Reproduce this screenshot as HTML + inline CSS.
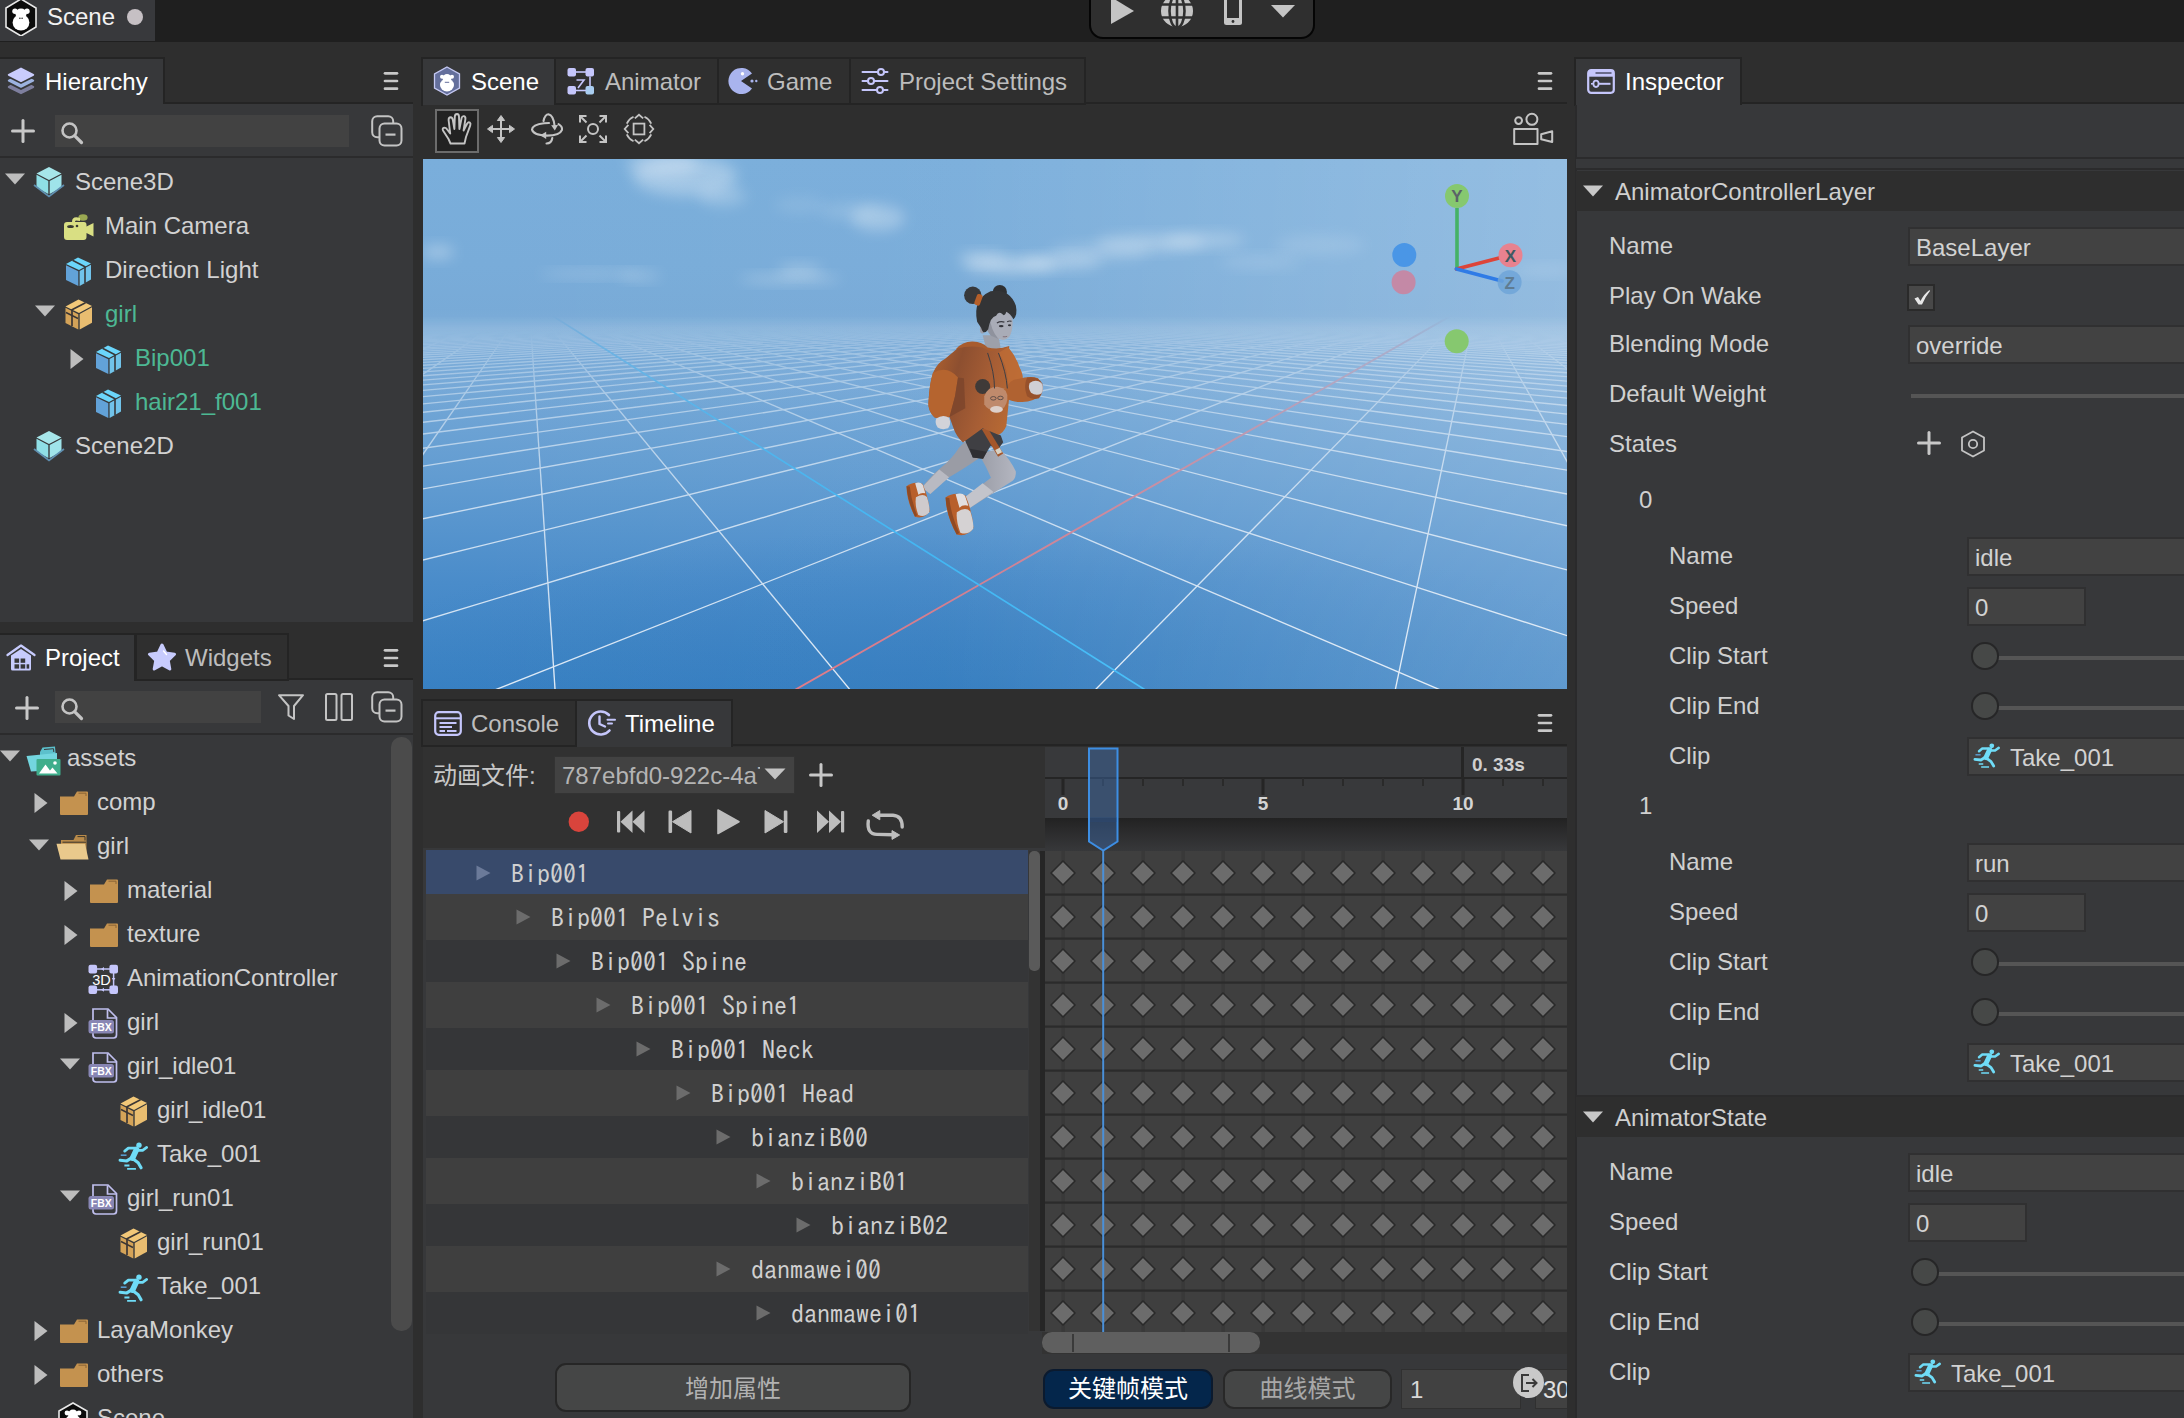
<!DOCTYPE html>
<html><head><meta charset="utf-8"><title>Scene</title>
<style>
html,body{margin:0;padding:0;}
body{width:2184px;height:1418px;overflow:hidden;background:#2e2e2e;position:relative;font-family:"Liberation Sans", "Noto Sans CJK SC", sans-serif;}
div,svg{position:absolute;box-sizing:border-box;}
.t{white-space:nowrap;}
.m{white-space:pre;font-family:"IPAGothic", "Liberation Mono", monospace;}
</style></head><body>
<div style="left:0px;top:0px;width:2184px;height:42px;background:#1f1f1f;"></div>
<div style="left:0px;top:0px;width:155px;height:41px;background:#38393c;"></div>
<svg style="left:3px;top:0px;" width="36" height="36" viewBox="0 0 36 36"><polygon points="18,-1 33,8 33,27 18,36 3,27 3,8" fill="#0c0c0c" stroke="#e8e8e8" stroke-width="1.6"/>
<ellipse cx="18" cy="22.5" rx="8.4" ry="8" fill="#fff"/><ellipse cx="18" cy="13.6" rx="5.6" ry="5" fill="#fff"/>
<circle cx="12" cy="11.3" r="2.7" fill="#fff"/><circle cx="24" cy="11.3" r="2.7" fill="#fff"/>
<circle cx="16.9" cy="18.3" r="0.7" fill="#0c0c0c"/><circle cx="19.1" cy="18.3" r="0.7" fill="#0c0c0c"/></svg>
<div class="t" style="left:47px;top:1.0px;font-size:24px;line-height:32px;color:#f2f2f2;">Scene</div>
<div style="left:127px;top:9px;width:16px;height:16px;background:#c6c0c4;border-radius:50%;"></div>
<div style="left:1089px;top:-14px;width:226px;height:53px;background:#2f2f2f;border:2px solid #050505;border-radius:14px;"></div>
<svg style="left:1100px;top:0px;" width="210" height="36" viewBox="0 0 210 36"><polygon points="11,-3 34,11 11,24" fill="#c4c4c4"/>
<g><circle cx="77" cy="11" r="16" fill="#c4c4c4"/>
<g stroke="#2f2f2f" stroke-width="2.6" fill="none"><line x1="60" y1="4.5" x2="94" y2="4.5"/><line x1="60" y1="17.5" x2="94" y2="17.5"/>
<line x1="77" y1="-6" x2="77" y2="28"/><ellipse cx="77" cy="11" rx="7.5" ry="16.5"/></g></g>
<rect x="124" y="-8" width="18" height="33" rx="2.5" fill="#c4c4c4"/><rect x="127" y="-4" width="12" height="22" fill="#2f2f2f"/><circle cx="133" cy="21.5" r="1.4" fill="#2f2f2f"/>
<polygon points="171,5 195,5 183,17.5" fill="#c4c4c4"/></svg>
<div style="left:0px;top:102px;width:413px;height:3px;background:#242424;"></div>
<div style="left:0px;top:104px;width:413px;height:518px;background:#37383a;"></div>
<div style="left:0px;top:678px;width:413px;height:3px;background:#242424;"></div>
<div style="left:0px;top:680px;width:413px;height:744px;background:#37383a;"></div>
<div style="left:423px;top:102px;width:1144px;height:3px;background:#242424;"></div>
<div style="left:423px;top:104px;width:1144px;height:586px;background:#2f2f2f;"></div>
<div style="left:423px;top:744px;width:1144px;height:3px;background:#242424;"></div>
<div style="left:423px;top:746px;width:1144px;height:674px;background:#2e2e2e;"></div>
<div style="left:1576px;top:102px;width:612px;height:3px;background:#242424;"></div>
<div style="left:1576px;top:104px;width:612px;height:1316px;background:#37383a;"></div>
<svg style="left:423px;top:159px;" width="1144" height="530" viewBox="423 159 1144 530"><defs>
<linearGradient id="sky" x1="0" y1="0" x2="0" y2="1">
<stop offset="0" stop-color="#7aaedb"/><stop offset="0.2" stop-color="#79acd9"/><stop offset="0.3" stop-color="#78aad7"/>
<stop offset="0.42" stop-color="#75a8d7"/><stop offset="0.6" stop-color="#629cd1"/><stop offset="0.8" stop-color="#4a8cca"/><stop offset="1" stop-color="#3981c3"/>
</linearGradient>
<linearGradient id="hz" x1="0" y1="0" x2="1" y2="0">
<stop offset="0" stop-color="#fff" stop-opacity="0"/><stop offset="0.45" stop-color="#fff" stop-opacity="0.02"/><stop offset="1" stop-color="#fff" stop-opacity="0.2"/>
</linearGradient>
<linearGradient id="fog" x1="0" y1="0" x2="0" y2="1">
<stop offset="0" stop-color="#79abd8" stop-opacity="1"/><stop offset="0.25" stop-color="#79abd8" stop-opacity="0.9"/><stop offset="1" stop-color="#79abd8" stop-opacity="0"/>
</linearGradient>
<radialGradient id="deep" cx="0.5" cy="1" r="0.6"><stop offset="0" stop-color="#2f78bb" stop-opacity="0.55"/><stop offset="1" stop-color="#2f78bb" stop-opacity="0"/></radialGradient>
<filter id="bl" x="-30%" y="-60%" width="160%" height="220%"><feGaussianBlur stdDeviation="7"/></filter>
<filter id="bl2" x="-30%" y="-60%" width="160%" height="220%"><feGaussianBlur stdDeviation="4"/></filter>
<clipPath id="vp"><rect x="423" y="159" width="1144" height="530"/></clipPath>
</defs><rect x="423" y="159" width="1144" height="530" fill="url(#sky)"/><rect x="423" y="420" width="1144" height="269" fill="url(#deep)"/><ellipse cx="685" cy="176" rx="52" ry="20" fill="#fff" opacity="0.3" filter="url(#bl)"/><ellipse cx="662" cy="164" rx="36" ry="12" fill="#fff" opacity="0.25" filter="url(#bl)"/><ellipse cx="722" cy="196" rx="24" ry="10" fill="#fff" opacity="0.22" filter="url(#bl)"/><ellipse cx="878" cy="218" rx="27" ry="13" fill="#fff" opacity="0.28" filter="url(#bl)"/><ellipse cx="850" cy="211" rx="30" ry="8" fill="#fff" opacity="0.14" filter="url(#bl)"/><ellipse cx="800" cy="205" rx="25" ry="8" fill="#fff" opacity="0.1" filter="url(#bl)"/><ellipse cx="1010" cy="265" rx="46" ry="7" fill="#fff" opacity="0.42" filter="url(#bl)"/><ellipse cx="982" cy="258" rx="24" ry="6" fill="#fff" opacity="0.3" filter="url(#bl)"/><ellipse cx="1062" cy="262" rx="40" ry="7" fill="#fff" opacity="0.3" filter="url(#bl)"/><ellipse cx="1150" cy="243" rx="55" ry="8" fill="#fff" opacity="0.3" filter="url(#bl)"/><ellipse cx="1205" cy="240" rx="40" ry="7" fill="#fff" opacity="0.26" filter="url(#bl)"/><ellipse cx="1100" cy="252" rx="50" ry="8" fill="#fff" opacity="0.2" filter="url(#bl)"/><ellipse cx="438" cy="252" rx="16" ry="7" fill="#fff" opacity="0.3" filter="url(#bl)"/><ellipse cx="590" cy="274" rx="50" ry="4" fill="#fff" opacity="0.2" filter="url(#bl)"/><ellipse cx="640" cy="276" rx="20" ry="5" fill="#fff" opacity="0.2" filter="url(#bl)"/><ellipse cx="790" cy="279" rx="50" ry="5" fill="#fff" opacity="0.25" filter="url(#bl)"/><ellipse cx="800" cy="270" rx="22" ry="6" fill="#fff" opacity="0.25" filter="url(#bl)"/><ellipse cx="1320" cy="245" rx="45" ry="10" fill="#fff" opacity="0.12" filter="url(#bl)"/><ellipse cx="1545" cy="270" rx="30" ry="5" fill="#fff" opacity="0.15" filter="url(#bl)"/><ellipse cx="1260" cy="262" rx="40" ry="6" fill="#fff" opacity="0.15" filter="url(#bl)"/><defs><linearGradient id="gm" gradientUnits="userSpaceOnUse" x1="0" y1="316" x2="0" y2="689"><stop offset="0" stop-color="#000"/><stop offset="0.03" stop-color="#1e1e1e"/><stop offset="0.1" stop-color="#4a4a4a"/><stop offset="0.25" stop-color="#7c7c7c"/><stop offset="0.5" stop-color="#b4b4b4"/><stop offset="1" stop-color="#e4e4e4"/></linearGradient><mask id="gmask" maskUnits="userSpaceOnUse" x="423" y="159" width="1144" height="530"><rect x="423" y="316" width="1144" height="373" fill="url(#gm)"/></mask></defs><g clip-path="url(#vp)"><g mask="url(#gmask)"><line x1="-1129790.2" y1="17247.0" x2="-13531.1" y2="511.8" stroke="#f4f8fd" stroke-width="1.35" opacity="1"/><line x1="1148577.2" y1="17247.0" x2="30930.3" y2="736.1" stroke="#f4f8fd" stroke-width="1.35" opacity="1"/><line x1="-1116932.7" y1="17247.0" x2="-11364.7" y2="481.4" stroke="#f4f8fd" stroke-width="1.35" opacity="1"/><line x1="1135501.4" y1="17247.0" x2="22979.4" y2="622.3" stroke="#f4f8fd" stroke-width="1.35" opacity="1"/><line x1="-1104075.3" y1="17247.0" x2="-9744.7" y2="458.6" stroke="#f4f8fd" stroke-width="1.35" opacity="1"/><line x1="1122425.7" y1="17247.0" x2="18325.2" y2="555.7" stroke="#f4f8fd" stroke-width="1.35" opacity="1"/><line x1="-1091217.8" y1="17247.0" x2="-8487.7" y2="441.0" stroke="#f4f8fd" stroke-width="1.35" opacity="1"/><line x1="1109350.0" y1="17247.0" x2="15269.3" y2="512.0" stroke="#f4f8fd" stroke-width="1.35" opacity="1"/><line x1="-1078360.4" y1="17247.0" x2="-7484.0" y2="426.9" stroke="#f4f8fd" stroke-width="1.35" opacity="1"/><line x1="1096274.3" y1="17247.0" x2="13109.1" y2="481.1" stroke="#f4f8fd" stroke-width="1.35" opacity="1"/><line x1="-1065503.0" y1="17247.0" x2="-6663.9" y2="415.3" stroke="#f4f8fd" stroke-width="1.35" opacity="1"/><line x1="1083198.5" y1="17247.0" x2="11501.2" y2="458.0" stroke="#f4f8fd" stroke-width="1.35" opacity="1"/><line x1="-1052645.5" y1="17247.0" x2="-5981.4" y2="405.8" stroke="#f4f8fd" stroke-width="1.35" opacity="1"/><line x1="1070122.8" y1="17247.0" x2="10257.7" y2="440.2" stroke="#f4f8fd" stroke-width="1.35" opacity="1"/><line x1="-1039788.1" y1="17247.0" x2="-5404.5" y2="397.7" stroke="#f4f8fd" stroke-width="1.35" opacity="1"/><line x1="1057047.1" y1="17247.0" x2="9267.4" y2="426.1" stroke="#f4f8fd" stroke-width="1.35" opacity="1"/><line x1="-1026930.6" y1="17247.0" x2="-4910.4" y2="390.7" stroke="#f4f8fd" stroke-width="1.35" opacity="1"/><line x1="1043971.4" y1="17247.0" x2="8460.0" y2="414.5" stroke="#f4f8fd" stroke-width="1.35" opacity="1"/><line x1="-1014073.2" y1="17247.0" x2="-4482.5" y2="384.7" stroke="#f4f8fd" stroke-width="1.35" opacity="1"/><line x1="1030895.6" y1="17247.0" x2="7789.2" y2="404.9" stroke="#f4f8fd" stroke-width="1.35" opacity="1"/><line x1="-1001215.7" y1="17247.0" x2="-4108.3" y2="379.4" stroke="#f4f8fd" stroke-width="1.35" opacity="1"/><line x1="1017819.9" y1="17247.0" x2="7223.1" y2="396.8" stroke="#f4f8fd" stroke-width="1.35" opacity="1"/><line x1="-988358.3" y1="17247.0" x2="-3778.3" y2="374.8" stroke="#f4f8fd" stroke-width="1.35" opacity="1"/><line x1="1004744.2" y1="17247.0" x2="6738.8" y2="389.9" stroke="#f4f8fd" stroke-width="1.35" opacity="1"/><line x1="-975500.8" y1="17247.0" x2="-3485.2" y2="370.7" stroke="#f4f8fd" stroke-width="1.35" opacity="1"/><line x1="991668.5" y1="17247.0" x2="6319.9" y2="383.9" stroke="#f4f8fd" stroke-width="1.35" opacity="1"/><line x1="-962643.4" y1="17247.0" x2="-3223.0" y2="367.0" stroke="#f4f8fd" stroke-width="1.35" opacity="1"/><line x1="978592.7" y1="17247.0" x2="5953.9" y2="378.6" stroke="#f4f8fd" stroke-width="1.35" opacity="1"/><line x1="-949785.9" y1="17247.0" x2="-2987.2" y2="363.7" stroke="#f4f8fd" stroke-width="1.35" opacity="1"/><line x1="965517.0" y1="17247.0" x2="5631.5" y2="374.0" stroke="#f4f8fd" stroke-width="1.35" opacity="1"/><line x1="-936928.5" y1="17247.0" x2="-2773.9" y2="360.7" stroke="#f4f8fd" stroke-width="1.35" opacity="1"/><line x1="952441.3" y1="17247.0" x2="5345.2" y2="369.9" stroke="#f4f8fd" stroke-width="1.35" opacity="1"/><line x1="-924071.0" y1="17247.0" x2="-2580.0" y2="358.0" stroke="#f4f8fd" stroke-width="1.35" opacity="1"/><line x1="939365.6" y1="17247.0" x2="5089.4" y2="366.3" stroke="#f4f8fd" stroke-width="1.35" opacity="1"/><line x1="-911213.6" y1="17247.0" x2="-2403.0" y2="355.5" stroke="#f4f8fd" stroke-width="1.35" opacity="1"/><line x1="926289.8" y1="17247.0" x2="4859.3" y2="363.0" stroke="#f4f8fd" stroke-width="1.35" opacity="1"/><line x1="-898356.1" y1="17247.0" x2="-2240.9" y2="353.2" stroke="#f4f8fd" stroke-width="1.35" opacity="1"/><line x1="913214.1" y1="17247.0" x2="4651.4" y2="360.0" stroke="#f4f8fd" stroke-width="1.35" opacity="1"/><line x1="-885498.7" y1="17247.0" x2="-2091.7" y2="351.1" stroke="#f4f8fd" stroke-width="1.35" opacity="1"/><line x1="900138.4" y1="17247.0" x2="4462.5" y2="357.3" stroke="#f4f8fd" stroke-width="1.35" opacity="1"/><line x1="-872641.2" y1="17247.0" x2="-1954.1" y2="349.2" stroke="#f4f8fd" stroke-width="1.35" opacity="1"/><line x1="887062.6" y1="17247.0" x2="4290.1" y2="354.8" stroke="#f4f8fd" stroke-width="1.35" opacity="1"/><line x1="-859783.8" y1="17247.0" x2="-1826.7" y2="347.4" stroke="#f4f8fd" stroke-width="1.35" opacity="1"/><line x1="873986.9" y1="17247.0" x2="4132.2" y2="352.6" stroke="#f4f8fd" stroke-width="1.35" opacity="1"/><line x1="-846926.3" y1="17247.0" x2="-1708.4" y2="345.7" stroke="#f4f8fd" stroke-width="1.35" opacity="1"/><line x1="860911.2" y1="17247.0" x2="3987.1" y2="350.5" stroke="#f4f8fd" stroke-width="1.35" opacity="1"/><line x1="-834068.9" y1="17247.0" x2="-1598.3" y2="344.2" stroke="#f4f8fd" stroke-width="1.35" opacity="1"/><line x1="847835.5" y1="17247.0" x2="3853.2" y2="348.6" stroke="#f4f8fd" stroke-width="1.35" opacity="1"/><line x1="-821211.5" y1="17247.0" x2="-1495.5" y2="342.7" stroke="#f4f8fd" stroke-width="1.35" opacity="1"/><line x1="834759.7" y1="17247.0" x2="3729.3" y2="346.8" stroke="#f4f8fd" stroke-width="1.35" opacity="1"/><line x1="-808354.0" y1="17247.0" x2="-1399.4" y2="341.4" stroke="#f4f8fd" stroke-width="1.35" opacity="1"/><line x1="821684.0" y1="17247.0" x2="3614.2" y2="345.2" stroke="#f4f8fd" stroke-width="1.35" opacity="1"/><line x1="-795496.6" y1="17247.0" x2="-1309.3" y2="340.1" stroke="#f4f8fd" stroke-width="1.35" opacity="1"/><line x1="808608.3" y1="17247.0" x2="3507.2" y2="343.6" stroke="#f4f8fd" stroke-width="1.35" opacity="1"/><line x1="-782639.1" y1="17247.0" x2="-1224.7" y2="338.9" stroke="#f4f8fd" stroke-width="1.35" opacity="1"/><line x1="795532.6" y1="17247.0" x2="3407.3" y2="342.2" stroke="#f4f8fd" stroke-width="1.35" opacity="1"/><line x1="-769781.7" y1="17247.0" x2="-1145.1" y2="337.8" stroke="#f4f8fd" stroke-width="1.35" opacity="1"/><line x1="782456.8" y1="17247.0" x2="3314.0" y2="340.9" stroke="#f4f8fd" stroke-width="1.35" opacity="1"/><line x1="-756924.2" y1="17247.0" x2="-1070.0" y2="336.8" stroke="#f4f8fd" stroke-width="1.35" opacity="1"/><line x1="769381.1" y1="17247.0" x2="3226.4" y2="339.6" stroke="#f4f8fd" stroke-width="1.35" opacity="1"/><line x1="-744066.8" y1="17247.0" x2="-999.1" y2="335.8" stroke="#f4f8fd" stroke-width="1.35" opacity="1"/><line x1="756305.4" y1="17247.0" x2="3144.3" y2="338.4" stroke="#f4f8fd" stroke-width="1.35" opacity="1"/><line x1="-731209.3" y1="17247.0" x2="-932.0" y2="334.8" stroke="#f4f8fd" stroke-width="1.35" opacity="1"/><line x1="743229.7" y1="17247.0" x2="3066.9" y2="337.3" stroke="#f4f8fd" stroke-width="1.35" opacity="1"/><line x1="-718351.9" y1="17247.0" x2="-868.5" y2="333.9" stroke="#f4f8fd" stroke-width="1.35" opacity="1"/><line x1="730153.9" y1="17247.0" x2="2994.1" y2="336.3" stroke="#f4f8fd" stroke-width="1.35" opacity="1"/><line x1="-705494.4" y1="17247.0" x2="-808.3" y2="333.1" stroke="#f4f8fd" stroke-width="1.35" opacity="1"/><line x1="717078.2" y1="17247.0" x2="2925.3" y2="335.3" stroke="#f4f8fd" stroke-width="1.35" opacity="1"/><line x1="-692637.0" y1="17247.0" x2="-751.0" y2="332.3" stroke="#f4f8fd" stroke-width="1.35" opacity="1"/><line x1="704002.5" y1="17247.0" x2="2860.2" y2="334.4" stroke="#f4f8fd" stroke-width="1.35" opacity="1"/><line x1="-679779.5" y1="17247.0" x2="-696.6" y2="331.5" stroke="#f4f8fd" stroke-width="1.35" opacity="1"/><line x1="690926.8" y1="17247.0" x2="2798.5" y2="333.5" stroke="#f4f8fd" stroke-width="1.35" opacity="1"/><line x1="-666922.1" y1="17247.0" x2="-644.7" y2="330.8" stroke="#f4f8fd" stroke-width="1.35" opacity="1"/><line x1="677851.0" y1="17247.0" x2="2740.1" y2="332.6" stroke="#f4f8fd" stroke-width="1.35" opacity="1"/><line x1="-654064.6" y1="17247.0" x2="-595.3" y2="330.1" stroke="#f4f8fd" stroke-width="1.35" opacity="1"/><line x1="664775.3" y1="17247.0" x2="2684.6" y2="331.9" stroke="#f4f8fd" stroke-width="1.35" opacity="1"/><line x1="-641207.2" y1="17247.0" x2="-548.1" y2="329.4" stroke="#f4f8fd" stroke-width="1.35" opacity="1"/><line x1="651699.6" y1="17247.0" x2="2631.8" y2="331.1" stroke="#f4f8fd" stroke-width="1.35" opacity="1"/><line x1="-628349.7" y1="17247.0" x2="-503.1" y2="328.8" stroke="#f4f8fd" stroke-width="1.35" opacity="1"/><line x1="638623.8" y1="17247.0" x2="2581.5" y2="330.4" stroke="#f4f8fd" stroke-width="1.35" opacity="1"/><line x1="-615492.3" y1="17247.0" x2="-460.0" y2="328.2" stroke="#f4f8fd" stroke-width="1.35" opacity="1"/><line x1="625548.1" y1="17247.0" x2="2533.6" y2="329.7" stroke="#f4f8fd" stroke-width="1.35" opacity="1"/><line x1="-602634.8" y1="17247.0" x2="-418.7" y2="327.6" stroke="#f4f8fd" stroke-width="1.35" opacity="1"/><line x1="612472.4" y1="17247.0" x2="2487.8" y2="329.0" stroke="#f4f8fd" stroke-width="1.35" opacity="1"/><line x1="-589777.4" y1="17247.0" x2="-379.1" y2="327.1" stroke="#f4f8fd" stroke-width="1.35" opacity="1"/><line x1="599396.7" y1="17247.0" x2="2444.1" y2="328.4" stroke="#f4f8fd" stroke-width="1.35" opacity="1"/><line x1="-576919.9" y1="17247.0" x2="-341.2" y2="326.5" stroke="#f4f8fd" stroke-width="1.35" opacity="1"/><line x1="586320.9" y1="17247.0" x2="2402.3" y2="327.8" stroke="#f4f8fd" stroke-width="1.35" opacity="1"/><line x1="-564062.5" y1="17247.0" x2="-304.8" y2="326.0" stroke="#f4f8fd" stroke-width="1.35" opacity="1"/><line x1="573245.2" y1="17247.0" x2="2362.3" y2="327.2" stroke="#f4f8fd" stroke-width="1.35" opacity="1"/><line x1="-551205.1" y1="17247.0" x2="-269.8" y2="325.5" stroke="#f4f8fd" stroke-width="1.35" opacity="1"/><line x1="560169.5" y1="17247.0" x2="2324.0" y2="326.7" stroke="#f4f8fd" stroke-width="1.35" opacity="1"/><line x1="-538347.6" y1="17247.0" x2="-236.1" y2="325.1" stroke="#f4f8fd" stroke-width="1.35" opacity="1"/><line x1="547093.8" y1="17247.0" x2="2287.2" y2="326.2" stroke="#f4f8fd" stroke-width="1.35" opacity="1"/><line x1="-525490.2" y1="17247.0" x2="-203.8" y2="324.6" stroke="#f4f8fd" stroke-width="1.35" opacity="1"/><line x1="534018.0" y1="17247.0" x2="2251.9" y2="325.7" stroke="#f4f8fd" stroke-width="1.35" opacity="1"/><line x1="-512632.7" y1="17247.0" x2="-172.6" y2="324.2" stroke="#f4f8fd" stroke-width="1.35" opacity="1"/><line x1="520942.3" y1="17247.0" x2="2218.0" y2="325.2" stroke="#f4f8fd" stroke-width="1.35" opacity="1"/><line x1="-499775.3" y1="17247.0" x2="-142.6" y2="323.7" stroke="#f4f8fd" stroke-width="1.35" opacity="1"/><line x1="507866.6" y1="17247.0" x2="2185.4" y2="324.7" stroke="#f4f8fd" stroke-width="1.35" opacity="1"/><line x1="-486917.8" y1="17247.0" x2="-113.6" y2="323.3" stroke="#f4f8fd" stroke-width="1.35" opacity="1"/><line x1="494790.9" y1="17247.0" x2="2154.1" y2="324.3" stroke="#f4f8fd" stroke-width="1.35" opacity="1"/><line x1="-474060.4" y1="17247.0" x2="-85.7" y2="322.9" stroke="#f4f8fd" stroke-width="1.35" opacity="1"/><line x1="481715.1" y1="17247.0" x2="2123.9" y2="323.8" stroke="#f4f8fd" stroke-width="1.35" opacity="1"/><line x1="-461202.9" y1="17247.0" x2="-58.7" y2="322.6" stroke="#f4f8fd" stroke-width="1.35" opacity="1"/><line x1="468639.4" y1="17247.0" x2="2094.8" y2="323.4" stroke="#f4f8fd" stroke-width="1.35" opacity="1"/><line x1="-448345.5" y1="17247.0" x2="-32.6" y2="322.2" stroke="#f4f8fd" stroke-width="1.35" opacity="1"/><line x1="455563.7" y1="17247.0" x2="2066.7" y2="323.0" stroke="#f4f8fd" stroke-width="1.35" opacity="1"/><line x1="-435488.0" y1="17247.0" x2="-7.5" y2="321.8" stroke="#f4f8fd" stroke-width="1.35" opacity="1"/><line x1="442488.0" y1="17247.0" x2="2039.7" y2="322.6" stroke="#f4f8fd" stroke-width="1.35" opacity="1"/><line x1="-422630.6" y1="17247.0" x2="16.9" y2="321.5" stroke="#f4f8fd" stroke-width="1.35" opacity="1"/><line x1="429412.2" y1="17247.0" x2="2013.6" y2="322.2" stroke="#f4f8fd" stroke-width="1.35" opacity="1"/><line x1="-409773.1" y1="17247.0" x2="40.5" y2="321.2" stroke="#f4f8fd" stroke-width="1.35" opacity="1"/><line x1="416336.5" y1="17247.0" x2="1988.3" y2="321.9" stroke="#f4f8fd" stroke-width="1.35" opacity="1"/><line x1="-396915.7" y1="17247.0" x2="63.3" y2="320.9" stroke="#f4f8fd" stroke-width="1.35" opacity="1"/><line x1="403260.8" y1="17247.0" x2="1963.9" y2="321.5" stroke="#f4f8fd" stroke-width="1.35" opacity="1"/><line x1="-384058.2" y1="17247.0" x2="85.4" y2="320.5" stroke="#f4f8fd" stroke-width="1.35" opacity="1"/><line x1="390185.0" y1="17247.0" x2="1940.3" y2="321.2" stroke="#f4f8fd" stroke-width="1.35" opacity="1"/><line x1="-371200.8" y1="17247.0" x2="106.9" y2="320.2" stroke="#f4f8fd" stroke-width="1.35" opacity="1"/><line x1="377109.3" y1="17247.0" x2="1917.5" y2="320.9" stroke="#f4f8fd" stroke-width="1.35" opacity="1"/><line x1="-358343.3" y1="17247.0" x2="127.6" y2="320.0" stroke="#f4f8fd" stroke-width="1.35" opacity="1"/><line x1="364033.6" y1="17247.0" x2="1895.4" y2="320.6" stroke="#f4f8fd" stroke-width="1.35" opacity="1"/><line x1="-345485.9" y1="17247.0" x2="147.8" y2="319.7" stroke="#f4f8fd" stroke-width="1.35" opacity="1"/><line x1="350957.9" y1="17247.0" x2="1874.0" y2="320.2" stroke="#f4f8fd" stroke-width="1.35" opacity="1"/><line x1="-332628.4" y1="17247.0" x2="167.4" y2="319.4" stroke="#f4f8fd" stroke-width="1.35" opacity="1"/><line x1="337882.1" y1="17247.0" x2="1853.2" y2="320.0" stroke="#f4f8fd" stroke-width="1.35" opacity="1"/><line x1="-319771.0" y1="17247.0" x2="186.4" y2="319.1" stroke="#f4f8fd" stroke-width="1.35" opacity="1"/><line x1="324806.4" y1="17247.0" x2="1833.1" y2="319.7" stroke="#f4f8fd" stroke-width="1.35" opacity="1"/><line x1="-306913.6" y1="17247.0" x2="204.8" y2="318.9" stroke="#f4f8fd" stroke-width="1.35" opacity="1"/><line x1="311730.7" y1="17247.0" x2="1813.6" y2="319.4" stroke="#f4f8fd" stroke-width="1.35" opacity="1"/><line x1="-294056.1" y1="17247.0" x2="222.8" y2="318.6" stroke="#f4f8fd" stroke-width="1.35" opacity="1"/><line x1="298655.0" y1="17247.0" x2="1794.7" y2="319.1" stroke="#f4f8fd" stroke-width="1.35" opacity="1"/><line x1="-281198.7" y1="17247.0" x2="240.2" y2="318.4" stroke="#f4f8fd" stroke-width="1.35" opacity="1"/><line x1="285579.2" y1="17247.0" x2="1776.3" y2="318.9" stroke="#f4f8fd" stroke-width="1.35" opacity="1"/><line x1="-268341.2" y1="17247.0" x2="257.2" y2="318.1" stroke="#f4f8fd" stroke-width="1.35" opacity="1"/><line x1="272503.5" y1="17247.0" x2="1758.4" y2="318.6" stroke="#f4f8fd" stroke-width="1.35" opacity="1"/><line x1="-255483.8" y1="17247.0" x2="273.7" y2="317.9" stroke="#f4f8fd" stroke-width="1.35" opacity="1"/><line x1="259427.8" y1="17247.0" x2="1741.1" y2="318.3" stroke="#f4f8fd" stroke-width="1.35" opacity="1"/><line x1="-242626.3" y1="17247.0" x2="289.7" y2="317.7" stroke="#f4f8fd" stroke-width="1.35" opacity="1"/><line x1="246352.1" y1="17247.0" x2="1724.2" y2="318.1" stroke="#f4f8fd" stroke-width="1.35" opacity="1"/><line x1="-229768.9" y1="17247.0" x2="305.4" y2="317.5" stroke="#f4f8fd" stroke-width="1.35" opacity="1"/><line x1="233276.3" y1="17247.0" x2="1707.8" y2="317.9" stroke="#f4f8fd" stroke-width="1.35" opacity="1"/><line x1="-216911.4" y1="17247.0" x2="320.6" y2="317.2" stroke="#f4f8fd" stroke-width="1.35" opacity="1"/><line x1="220200.6" y1="17247.0" x2="1691.8" y2="317.6" stroke="#f4f8fd" stroke-width="1.35" opacity="1"/><line x1="-204054.0" y1="17247.0" x2="335.4" y2="317.0" stroke="#f4f8fd" stroke-width="1.35" opacity="1"/><line x1="207124.9" y1="17247.0" x2="1676.3" y2="317.4" stroke="#f4f8fd" stroke-width="1.35" opacity="1"/><line x1="-191196.5" y1="17247.0" x2="349.9" y2="316.8" stroke="#f4f8fd" stroke-width="1.35" opacity="1"/><line x1="194049.2" y1="17247.0" x2="1661.1" y2="317.2" stroke="#f4f8fd" stroke-width="1.35" opacity="1"/><line x1="-178339.1" y1="17247.0" x2="364.0" y2="316.6" stroke="#f4f8fd" stroke-width="1.35" opacity="1"/><line x1="180973.4" y1="17247.0" x2="1646.4" y2="317.0" stroke="#f4f8fd" stroke-width="1.35" opacity="1"/><line x1="-165481.6" y1="17247.0" x2="377.8" y2="316.4" stroke="#f4f8fd" stroke-width="1.35" opacity="1"/><line x1="167897.7" y1="17247.0" x2="1632.0" y2="316.8" stroke="#f4f8fd" stroke-width="1.35" opacity="1"/><line x1="-152624.2" y1="17247.0" x2="391.2" y2="316.3" stroke="#f4f8fd" stroke-width="1.35" opacity="1"/><line x1="154822.0" y1="17247.0" x2="1618.0" y2="316.6" stroke="#f4f8fd" stroke-width="1.35" opacity="1"/><line x1="-139766.7" y1="17247.0" x2="404.3" y2="316.1" stroke="#f4f8fd" stroke-width="1.35" opacity="1"/><line x1="141746.2" y1="17247.0" x2="1604.4" y2="316.4" stroke="#f4f8fd" stroke-width="1.35" opacity="1"/><line x1="-126909.3" y1="17247.0" x2="417.0" y2="315.9" stroke="#f4f8fd" stroke-width="1.35" opacity="1"/><line x1="128670.5" y1="17247.0" x2="1591.1" y2="316.2" stroke="#f4f8fd" stroke-width="1.35" opacity="1"/><line x1="-114051.8" y1="17247.0" x2="429.5" y2="315.7" stroke="#f4f8fd" stroke-width="1.35" opacity="1"/><line x1="115594.8" y1="17247.0" x2="1578.1" y2="316.0" stroke="#f4f8fd" stroke-width="1.35" opacity="1"/><line x1="-101194.4" y1="17247.0" x2="441.7" y2="315.5" stroke="#f4f8fd" stroke-width="1.35" opacity="1"/><line x1="102519.1" y1="17247.0" x2="1565.4" y2="315.8" stroke="#f4f8fd" stroke-width="1.35" opacity="1"/><line x1="-88336.9" y1="17247.0" x2="453.6" y2="315.4" stroke="#f4f8fd" stroke-width="1.35" opacity="1"/><line x1="89443.3" y1="17247.0" x2="1553.1" y2="315.7" stroke="#f4f8fd" stroke-width="1.35" opacity="1"/><line x1="-75479.5" y1="17247.0" x2="465.3" y2="315.2" stroke="#f4f8fd" stroke-width="1.35" opacity="1"/><line x1="76367.6" y1="17247.0" x2="1541.0" y2="315.5" stroke="#f4f8fd" stroke-width="1.35" opacity="1"/><line x1="-62622.1" y1="17247.0" x2="476.6" y2="315.1" stroke="#f4f8fd" stroke-width="1.35" opacity="1"/><line x1="63291.9" y1="17247.0" x2="1529.2" y2="315.3" stroke="#f4f8fd" stroke-width="1.35" opacity="1"/><line x1="-49764.6" y1="17247.0" x2="487.8" y2="314.9" stroke="#f4f8fd" stroke-width="1.35" opacity="1"/><line x1="50216.2" y1="17247.0" x2="1517.7" y2="315.2" stroke="#f4f8fd" stroke-width="1.35" opacity="1"/><line x1="-36907.2" y1="17247.0" x2="498.6" y2="314.7" stroke="#f4f8fd" stroke-width="1.35" opacity="1"/><line x1="37140.4" y1="17247.0" x2="1506.4" y2="315.0" stroke="#f4f8fd" stroke-width="1.35" opacity="1"/><line x1="-24049.7" y1="17247.0" x2="509.3" y2="314.6" stroke="#f4f8fd" stroke-width="1.35" opacity="1"/><line x1="24064.7" y1="17247.0" x2="1495.4" y2="314.8" stroke="#f4f8fd" stroke-width="1.35" opacity="1"/><line x1="-11192.3" y1="17247.0" x2="519.7" y2="314.4" stroke="#f4f8fd" stroke-width="1.35" opacity="1"/><line x1="10989.0" y1="17247.0" x2="1484.7" y2="314.7" stroke="#f4f8fd" stroke-width="1.35" opacity="1"/><line x1="1665.2" y1="17247.0" x2="529.9" y2="314.3" stroke="#f4f8fd" stroke-width="1.35" opacity="1"/><line x1="-2086.7" y1="17247.0" x2="1474.2" y2="314.5" stroke="#f4f8fd" stroke-width="1.35" opacity="1"/><line x1="14522.6" y1="17247.0" x2="539.9" y2="314.2" stroke="#f4f8fd" stroke-width="1.35" opacity="1"/><line x1="-15162.5" y1="17247.0" x2="1463.9" y2="314.4" stroke="#f4f8fd" stroke-width="1.35" opacity="1"/><line x1="40237.5" y1="17247.0" x2="559.2" y2="313.9" stroke="#f4f8fd" stroke-width="1.35" opacity="1"/><line x1="-41313.9" y1="17247.0" x2="1443.9" y2="314.1" stroke="#f4f8fd" stroke-width="1.35" opacity="1"/><line x1="53095.0" y1="17247.0" x2="568.6" y2="313.8" stroke="#f4f8fd" stroke-width="1.35" opacity="1"/><line x1="-54389.6" y1="17247.0" x2="1434.3" y2="314.0" stroke="#f4f8fd" stroke-width="1.35" opacity="1"/><line x1="65952.4" y1="17247.0" x2="577.8" y2="313.6" stroke="#f4f8fd" stroke-width="1.35" opacity="1"/><line x1="-67465.4" y1="17247.0" x2="1424.8" y2="313.8" stroke="#f4f8fd" stroke-width="1.35" opacity="1"/><line x1="78809.9" y1="17247.0" x2="586.8" y2="313.5" stroke="#f4f8fd" stroke-width="1.35" opacity="1"/><line x1="-80541.1" y1="17247.0" x2="1415.6" y2="313.7" stroke="#f4f8fd" stroke-width="1.35" opacity="1"/><line x1="91667.3" y1="17247.0" x2="595.6" y2="313.4" stroke="#f4f8fd" stroke-width="1.35" opacity="1"/><line x1="-93616.8" y1="17247.0" x2="1406.5" y2="313.6" stroke="#f4f8fd" stroke-width="1.35" opacity="1"/><line x1="104524.8" y1="17247.0" x2="604.2" y2="313.3" stroke="#f4f8fd" stroke-width="1.35" opacity="1"/><line x1="-106692.6" y1="17247.0" x2="1397.6" y2="313.4" stroke="#f4f8fd" stroke-width="1.35" opacity="1"/><line x1="117382.2" y1="17247.0" x2="612.7" y2="313.1" stroke="#f4f8fd" stroke-width="1.35" opacity="1"/><line x1="-119768.3" y1="17247.0" x2="1388.9" y2="313.3" stroke="#f4f8fd" stroke-width="1.35" opacity="1"/><line x1="130239.7" y1="17247.0" x2="621.0" y2="313.0" stroke="#f4f8fd" stroke-width="1.35" opacity="1"/><line x1="-132844.0" y1="17247.0" x2="1380.4" y2="313.2" stroke="#f4f8fd" stroke-width="1.35" opacity="1"/><line x1="143097.1" y1="17247.0" x2="629.2" y2="312.9" stroke="#f4f8fd" stroke-width="1.35" opacity="1"/><line x1="-145919.7" y1="17247.0" x2="1372.1" y2="313.1" stroke="#f4f8fd" stroke-width="1.35" opacity="1"/><line x1="155954.6" y1="17247.0" x2="637.2" y2="312.8" stroke="#f4f8fd" stroke-width="1.35" opacity="1"/><line x1="-158995.5" y1="17247.0" x2="1363.9" y2="312.9" stroke="#f4f8fd" stroke-width="1.35" opacity="1"/><line x1="168812.0" y1="17247.0" x2="645.0" y2="312.7" stroke="#f4f8fd" stroke-width="1.35" opacity="1"/><line x1="-172071.2" y1="17247.0" x2="1355.8" y2="312.8" stroke="#f4f8fd" stroke-width="1.35" opacity="1"/><line x1="181669.4" y1="17247.0" x2="652.7" y2="312.6" stroke="#f4f8fd" stroke-width="1.35" opacity="1"/><line x1="-185146.9" y1="17247.0" x2="1347.9" y2="312.7" stroke="#f4f8fd" stroke-width="1.35" opacity="1"/><line x1="194526.9" y1="17247.0" x2="660.3" y2="312.5" stroke="#f4f8fd" stroke-width="1.35" opacity="1"/><line x1="-198222.6" y1="17247.0" x2="1340.2" y2="312.6" stroke="#f4f8fd" stroke-width="1.35" opacity="1"/><line x1="207384.3" y1="17247.0" x2="667.7" y2="312.4" stroke="#f4f8fd" stroke-width="1.35" opacity="1"/><line x1="-211298.4" y1="17247.0" x2="1332.6" y2="312.5" stroke="#f4f8fd" stroke-width="1.35" opacity="1"/><line x1="220241.8" y1="17247.0" x2="675.0" y2="312.3" stroke="#f4f8fd" stroke-width="1.35" opacity="1"/><line x1="-224374.1" y1="17247.0" x2="1325.1" y2="312.4" stroke="#f4f8fd" stroke-width="1.35" opacity="1"/><line x1="233099.2" y1="17247.0" x2="682.2" y2="312.2" stroke="#f4f8fd" stroke-width="1.35" opacity="1"/><line x1="-237449.8" y1="17247.0" x2="1317.8" y2="312.3" stroke="#f4f8fd" stroke-width="1.35" opacity="1"/><line x1="245956.7" y1="17247.0" x2="689.2" y2="312.1" stroke="#f4f8fd" stroke-width="1.35" opacity="1"/><line x1="-250525.5" y1="17247.0" x2="1310.6" y2="312.2" stroke="#f4f8fd" stroke-width="1.35" opacity="1"/><line x1="258814.1" y1="17247.0" x2="696.2" y2="312.0" stroke="#f4f8fd" stroke-width="1.35" opacity="1"/><line x1="-263601.3" y1="17247.0" x2="1303.6" y2="312.1" stroke="#f4f8fd" stroke-width="1.35" opacity="1"/><line x1="271671.6" y1="17247.0" x2="703.0" y2="311.9" stroke="#f4f8fd" stroke-width="1.35" opacity="1"/><line x1="-276677.0" y1="17247.0" x2="1296.7" y2="312.0" stroke="#f4f8fd" stroke-width="1.35" opacity="1"/><line x1="284529.0" y1="17247.0" x2="709.6" y2="311.8" stroke="#f4f8fd" stroke-width="1.35" opacity="1"/><line x1="-289752.7" y1="17247.0" x2="1289.9" y2="311.9" stroke="#f4f8fd" stroke-width="1.35" opacity="1"/><line x1="297386.5" y1="17247.0" x2="716.2" y2="311.7" stroke="#f4f8fd" stroke-width="1.35" opacity="1"/><line x1="-302828.4" y1="17247.0" x2="1283.2" y2="311.8" stroke="#f4f8fd" stroke-width="1.35" opacity="1"/><line x1="310243.9" y1="17247.0" x2="722.6" y2="311.6" stroke="#f4f8fd" stroke-width="1.35" opacity="1"/><line x1="-315904.2" y1="17247.0" x2="1276.6" y2="311.7" stroke="#f4f8fd" stroke-width="1.35" opacity="1"/><line x1="323101.4" y1="17247.0" x2="729.0" y2="311.5" stroke="#f4f8fd" stroke-width="1.35" opacity="1"/><line x1="-328979.9" y1="17247.0" x2="1270.1" y2="311.6" stroke="#f4f8fd" stroke-width="1.35" opacity="1"/><line x1="335958.8" y1="17247.0" x2="735.2" y2="311.4" stroke="#f4f8fd" stroke-width="1.35" opacity="1"/><line x1="-342055.6" y1="17247.0" x2="1263.8" y2="311.5" stroke="#f4f8fd" stroke-width="1.35" opacity="1"/><line x1="348816.3" y1="17247.0" x2="741.4" y2="311.3" stroke="#f4f8fd" stroke-width="1.35" opacity="1"/><line x1="-355131.4" y1="17247.0" x2="1257.6" y2="311.4" stroke="#f4f8fd" stroke-width="1.35" opacity="1"/><line x1="361673.7" y1="17247.0" x2="747.4" y2="311.2" stroke="#f4f8fd" stroke-width="1.35" opacity="1"/><line x1="-368207.1" y1="17247.0" x2="1251.4" y2="311.3" stroke="#f4f8fd" stroke-width="1.35" opacity="1"/><line x1="374531.2" y1="17247.0" x2="753.3" y2="311.2" stroke="#f4f8fd" stroke-width="1.35" opacity="1"/><line x1="-381282.8" y1="17247.0" x2="1245.4" y2="311.3" stroke="#f4f8fd" stroke-width="1.35" opacity="1"/><line x1="387388.6" y1="17247.0" x2="759.2" y2="311.1" stroke="#f4f8fd" stroke-width="1.35" opacity="1"/><line x1="-394358.5" y1="17247.0" x2="1239.5" y2="311.2" stroke="#f4f8fd" stroke-width="1.35" opacity="1"/><line x1="400246.1" y1="17247.0" x2="764.9" y2="311.0" stroke="#f4f8fd" stroke-width="1.35" opacity="1"/><line x1="-407434.3" y1="17247.0" x2="1233.6" y2="311.1" stroke="#f4f8fd" stroke-width="1.35" opacity="1"/><line x1="413103.5" y1="17247.0" x2="770.6" y2="310.9" stroke="#f4f8fd" stroke-width="1.35" opacity="1"/><line x1="-420510.0" y1="17247.0" x2="1227.9" y2="311.0" stroke="#f4f8fd" stroke-width="1.35" opacity="1"/><line x1="425960.9" y1="17247.0" x2="776.1" y2="310.8" stroke="#f4f8fd" stroke-width="1.35" opacity="1"/><line x1="-433585.7" y1="17247.0" x2="1222.3" y2="310.9" stroke="#f4f8fd" stroke-width="1.35" opacity="1"/><line x1="438818.4" y1="17247.0" x2="781.6" y2="310.8" stroke="#f4f8fd" stroke-width="1.35" opacity="1"/><line x1="-446661.4" y1="17247.0" x2="1216.7" y2="310.8" stroke="#f4f8fd" stroke-width="1.35" opacity="1"/><line x1="451675.8" y1="17247.0" x2="787.0" y2="310.7" stroke="#f4f8fd" stroke-width="1.35" opacity="1"/><line x1="-459737.2" y1="17247.0" x2="1211.2" y2="310.8" stroke="#f4f8fd" stroke-width="1.35" opacity="1"/><line x1="464533.3" y1="17247.0" x2="792.3" y2="310.6" stroke="#f4f8fd" stroke-width="1.35" opacity="1"/><line x1="-472812.9" y1="17247.0" x2="1205.9" y2="310.7" stroke="#f4f8fd" stroke-width="1.35" opacity="1"/><line x1="477390.7" y1="17247.0" x2="797.5" y2="310.5" stroke="#f4f8fd" stroke-width="1.35" opacity="1"/><line x1="-485888.6" y1="17247.0" x2="1200.6" y2="310.6" stroke="#f4f8fd" stroke-width="1.35" opacity="1"/><line x1="490248.2" y1="17247.0" x2="802.7" y2="310.5" stroke="#f4f8fd" stroke-width="1.35" opacity="1"/><line x1="-498964.3" y1="17247.0" x2="1195.4" y2="310.5" stroke="#f4f8fd" stroke-width="1.35" opacity="1"/><line x1="503105.6" y1="17247.0" x2="807.8" y2="310.4" stroke="#f4f8fd" stroke-width="1.35" opacity="1"/><line x1="-512040.1" y1="17247.0" x2="1190.2" y2="310.5" stroke="#f4f8fd" stroke-width="1.35" opacity="1"/><line x1="515963.1" y1="17247.0" x2="812.8" y2="310.3" stroke="#f4f8fd" stroke-width="1.35" opacity="1"/><line x1="-525115.8" y1="17247.0" x2="1185.2" y2="310.4" stroke="#f4f8fd" stroke-width="1.35" opacity="1"/><line x1="528820.5" y1="17247.0" x2="817.7" y2="310.3" stroke="#f4f8fd" stroke-width="1.35" opacity="1"/><line x1="-538191.5" y1="17247.0" x2="1180.2" y2="310.3" stroke="#f4f8fd" stroke-width="1.35" opacity="1"/><line x1="541678.0" y1="17247.0" x2="822.5" y2="310.2" stroke="#f4f8fd" stroke-width="1.35" opacity="1"/><line x1="-551267.2" y1="17247.0" x2="1175.3" y2="310.2" stroke="#f4f8fd" stroke-width="1.35" opacity="1"/><line x1="554535.4" y1="17247.0" x2="827.3" y2="310.1" stroke="#f4f8fd" stroke-width="1.35" opacity="1"/><line x1="-564343.0" y1="17247.0" x2="1170.5" y2="310.2" stroke="#f4f8fd" stroke-width="1.35" opacity="1"/><line x1="567392.9" y1="17247.0" x2="832.0" y2="310.1" stroke="#f4f8fd" stroke-width="1.35" opacity="1"/><line x1="-577418.7" y1="17247.0" x2="1165.7" y2="310.1" stroke="#f4f8fd" stroke-width="1.35" opacity="1"/><line x1="580250.3" y1="17247.0" x2="836.7" y2="310.0" stroke="#f4f8fd" stroke-width="1.35" opacity="1"/><line x1="-590494.4" y1="17247.0" x2="1161.0" y2="310.0" stroke="#f4f8fd" stroke-width="1.35" opacity="1"/><line x1="593107.8" y1="17247.0" x2="841.2" y2="309.9" stroke="#f4f8fd" stroke-width="1.35" opacity="1"/><line x1="-603570.2" y1="17247.0" x2="1156.4" y2="310.0" stroke="#f4f8fd" stroke-width="1.35" opacity="1"/><line x1="605965.2" y1="17247.0" x2="845.8" y2="309.9" stroke="#f4f8fd" stroke-width="1.35" opacity="1"/><line x1="-616645.9" y1="17247.0" x2="1151.8" y2="309.9" stroke="#f4f8fd" stroke-width="1.35" opacity="1"/><line x1="618822.7" y1="17247.0" x2="850.2" y2="309.8" stroke="#f4f8fd" stroke-width="1.35" opacity="1"/><line x1="-629721.6" y1="17247.0" x2="1147.4" y2="309.9" stroke="#f4f8fd" stroke-width="1.35" opacity="1"/><line x1="631680.1" y1="17247.0" x2="854.6" y2="309.7" stroke="#f4f8fd" stroke-width="1.35" opacity="1"/><line x1="-642797.3" y1="17247.0" x2="1142.9" y2="309.8" stroke="#f4f8fd" stroke-width="1.35" opacity="1"/><line x1="644537.6" y1="17247.0" x2="858.9" y2="309.7" stroke="#f4f8fd" stroke-width="1.35" opacity="1"/><line x1="-655873.1" y1="17247.0" x2="1138.6" y2="309.7" stroke="#f4f8fd" stroke-width="1.35" opacity="1"/><line x1="657395.0" y1="17247.0" x2="863.2" y2="309.6" stroke="#f4f8fd" stroke-width="1.35" opacity="1"/><line x1="-668948.8" y1="17247.0" x2="1134.3" y2="309.7" stroke="#f4f8fd" stroke-width="1.35" opacity="1"/><line x1="670252.4" y1="17247.0" x2="867.4" y2="309.6" stroke="#f4f8fd" stroke-width="1.35" opacity="1"/><line x1="-682024.5" y1="17247.0" x2="1130.0" y2="309.6" stroke="#f4f8fd" stroke-width="1.35" opacity="1"/><line x1="683109.9" y1="17247.0" x2="871.5" y2="309.5" stroke="#f4f8fd" stroke-width="1.35" opacity="1"/><line x1="-695100.2" y1="17247.0" x2="1125.9" y2="309.5" stroke="#f4f8fd" stroke-width="1.35" opacity="1"/><line x1="695967.3" y1="17247.0" x2="875.6" y2="309.4" stroke="#f4f8fd" stroke-width="1.35" opacity="1"/><line x1="-708176.0" y1="17247.0" x2="1121.7" y2="309.5" stroke="#f4f8fd" stroke-width="1.35" opacity="1"/><line x1="708824.8" y1="17247.0" x2="879.7" y2="309.4" stroke="#f4f8fd" stroke-width="1.35" opacity="1"/><line x1="-721251.7" y1="17247.0" x2="1117.7" y2="309.4" stroke="#f4f8fd" stroke-width="1.35" opacity="1"/><line x1="721682.2" y1="17247.0" x2="883.7" y2="309.3" stroke="#f4f8fd" stroke-width="1.35" opacity="1"/><line x1="-734327.4" y1="17247.0" x2="1113.7" y2="309.4" stroke="#f4f8fd" stroke-width="1.35" opacity="1"/><line x1="734539.7" y1="17247.0" x2="887.6" y2="309.3" stroke="#f4f8fd" stroke-width="1.35" opacity="1"/><line x1="-747403.1" y1="17247.0" x2="1109.7" y2="309.3" stroke="#f4f8fd" stroke-width="1.35" opacity="1"/><line x1="747397.1" y1="17247.0" x2="891.5" y2="309.2" stroke="#f4f8fd" stroke-width="1.35" opacity="1"/><line x1="-760478.9" y1="17247.0" x2="1105.8" y2="309.3" stroke="#f4f8fd" stroke-width="1.35" opacity="1"/><line x1="760254.6" y1="17247.0" x2="895.3" y2="309.2" stroke="#f4f8fd" stroke-width="1.35" opacity="1"/><line x1="-773554.6" y1="17247.0" x2="1102.0" y2="309.2" stroke="#f4f8fd" stroke-width="1.35" opacity="1"/><line x1="773112.0" y1="17247.0" x2="899.1" y2="309.1" stroke="#f4f8fd" stroke-width="1.35" opacity="1"/><line x1="-786630.3" y1="17247.0" x2="1098.2" y2="309.1" stroke="#f4f8fd" stroke-width="1.35" opacity="1"/><line x1="785969.5" y1="17247.0" x2="902.8" y2="309.1" stroke="#f4f8fd" stroke-width="1.35" opacity="1"/><line x1="-799706.0" y1="17247.0" x2="1094.4" y2="309.1" stroke="#f4f8fd" stroke-width="1.35" opacity="1"/><line x1="798826.9" y1="17247.0" x2="906.5" y2="309.0" stroke="#f4f8fd" stroke-width="1.35" opacity="1"/><line x1="-812781.8" y1="17247.0" x2="1090.7" y2="309.0" stroke="#f4f8fd" stroke-width="1.35" opacity="1"/><line x1="811684.4" y1="17247.0" x2="910.1" y2="309.0" stroke="#f4f8fd" stroke-width="1.35" opacity="1"/><line x1="-825857.5" y1="17247.0" x2="1087.1" y2="309.0" stroke="#f4f8fd" stroke-width="1.35" opacity="1"/><line x1="824541.8" y1="17247.0" x2="913.7" y2="308.9" stroke="#f4f8fd" stroke-width="1.35" opacity="1"/><line x1="-838933.2" y1="17247.0" x2="1083.5" y2="308.9" stroke="#f4f8fd" stroke-width="1.35" opacity="1"/><line x1="837399.3" y1="17247.0" x2="917.3" y2="308.9" stroke="#f4f8fd" stroke-width="1.35" opacity="1"/><line x1="-852009.0" y1="17247.0" x2="1079.9" y2="308.9" stroke="#f4f8fd" stroke-width="1.35" opacity="1"/><line x1="850256.7" y1="17247.0" x2="920.8" y2="308.8" stroke="#f4f8fd" stroke-width="1.35" opacity="1"/><line x1="-865084.7" y1="17247.0" x2="1076.4" y2="308.8" stroke="#f4f8fd" stroke-width="1.35" opacity="1"/><line x1="863114.2" y1="17247.0" x2="924.2" y2="308.8" stroke="#f4f8fd" stroke-width="1.35" opacity="1"/><line x1="-878160.4" y1="17247.0" x2="1072.9" y2="308.8" stroke="#f4f8fd" stroke-width="1.35" opacity="1"/><line x1="875971.6" y1="17247.0" x2="927.6" y2="308.7" stroke="#f4f8fd" stroke-width="1.35" opacity="1"/><line x1="-891236.1" y1="17247.0" x2="1069.5" y2="308.7" stroke="#f4f8fd" stroke-width="1.35" opacity="1"/><line x1="888829.1" y1="17247.0" x2="931.0" y2="308.7" stroke="#f4f8fd" stroke-width="1.35" opacity="1"/><line x1="-904311.9" y1="17247.0" x2="1066.1" y2="308.7" stroke="#f4f8fd" stroke-width="1.35" opacity="1"/><line x1="901686.5" y1="17247.0" x2="934.3" y2="308.6" stroke="#f4f8fd" stroke-width="1.35" opacity="1"/><line x1="-917387.6" y1="17247.0" x2="1062.8" y2="308.6" stroke="#f4f8fd" stroke-width="1.35" opacity="1"/><line x1="914543.9" y1="17247.0" x2="937.6" y2="308.6" stroke="#f4f8fd" stroke-width="1.35" opacity="1"/><line x1="-930463.3" y1="17247.0" x2="1059.5" y2="308.6" stroke="#f4f8fd" stroke-width="1.35" opacity="1"/><line x1="927401.4" y1="17247.0" x2="940.9" y2="308.5" stroke="#f4f8fd" stroke-width="1.35" opacity="1"/><line x1="-943539.0" y1="17247.0" x2="1056.2" y2="308.5" stroke="#f4f8fd" stroke-width="1.35" opacity="1"/><line x1="940258.8" y1="17247.0" x2="944.1" y2="308.5" stroke="#f4f8fd" stroke-width="1.35" opacity="1"/><line x1="-956614.8" y1="17247.0" x2="1053.0" y2="308.5" stroke="#f4f8fd" stroke-width="1.35" opacity="1"/><line x1="953116.3" y1="17247.0" x2="947.3" y2="308.4" stroke="#f4f8fd" stroke-width="1.35" opacity="1"/><line x1="-969690.5" y1="17247.0" x2="1049.8" y2="308.5" stroke="#f4f8fd" stroke-width="1.35" opacity="1"/><line x1="965973.7" y1="17247.0" x2="950.4" y2="308.4" stroke="#f4f8fd" stroke-width="1.35" opacity="1"/><line x1="-982766.2" y1="17247.0" x2="1046.7" y2="308.4" stroke="#f4f8fd" stroke-width="1.35" opacity="1"/><line x1="978831.2" y1="17247.0" x2="953.5" y2="308.4" stroke="#f4f8fd" stroke-width="1.35" opacity="1"/><line x1="-995841.9" y1="17247.0" x2="1043.6" y2="308.4" stroke="#f4f8fd" stroke-width="1.35" opacity="1"/><line x1="991688.6" y1="17247.0" x2="956.5" y2="308.3" stroke="#f4f8fd" stroke-width="1.35" opacity="1"/><line x1="-1008917.7" y1="17247.0" x2="1040.5" y2="308.3" stroke="#f4f8fd" stroke-width="1.35" opacity="1"/><line x1="1004546.1" y1="17247.0" x2="959.6" y2="308.3" stroke="#f4f8fd" stroke-width="1.35" opacity="1"/><line x1="-1021993.4" y1="17247.0" x2="1037.5" y2="308.3" stroke="#f4f8fd" stroke-width="1.35" opacity="1"/><line x1="1017403.5" y1="17247.0" x2="962.6" y2="308.2" stroke="#f4f8fd" stroke-width="1.35" opacity="1"/><line x1="-1035069.1" y1="17247.0" x2="1034.5" y2="308.2" stroke="#f4f8fd" stroke-width="1.35" opacity="1"/><line x1="1030261.0" y1="17247.0" x2="965.5" y2="308.2" stroke="#f4f8fd" stroke-width="1.35" opacity="1"/><line x1="-1048144.8" y1="17247.0" x2="1031.5" y2="308.2" stroke="#f4f8fd" stroke-width="1.35" opacity="1"/><line x1="1043118.4" y1="17247.0" x2="968.4" y2="308.1" stroke="#f4f8fd" stroke-width="1.35" opacity="1"/><line x1="-1061220.6" y1="17247.0" x2="1028.6" y2="308.2" stroke="#f4f8fd" stroke-width="1.35" opacity="1"/><line x1="1055975.9" y1="17247.0" x2="971.3" y2="308.1" stroke="#f4f8fd" stroke-width="1.35" opacity="1"/><line x1="-1074296.3" y1="17247.0" x2="1025.7" y2="308.1" stroke="#f4f8fd" stroke-width="1.35" opacity="1"/><line x1="1068833.3" y1="17247.0" x2="974.2" y2="308.1" stroke="#f4f8fd" stroke-width="1.35" opacity="1"/><line x1="-1087372.0" y1="17247.0" x2="1022.8" y2="308.1" stroke="#f4f8fd" stroke-width="1.35" opacity="1"/><line x1="1081690.8" y1="17247.0" x2="977.0" y2="308.0" stroke="#f4f8fd" stroke-width="1.35" opacity="1"/><line x1="-1100447.8" y1="17247.0" x2="1020.0" y2="308.0" stroke="#f4f8fd" stroke-width="1.35" opacity="1"/><line x1="1094548.2" y1="17247.0" x2="979.8" y2="308.0" stroke="#f4f8fd" stroke-width="1.35" opacity="1"/><line x1="-1113523.5" y1="17247.0" x2="1017.2" y2="308.0" stroke="#f4f8fd" stroke-width="1.35" opacity="1"/><line x1="1107405.7" y1="17247.0" x2="982.6" y2="307.9" stroke="#f4f8fd" stroke-width="1.35" opacity="1"/><line x1="-1126599.2" y1="17247.0" x2="1014.5" y2="307.9" stroke="#f4f8fd" stroke-width="1.35" opacity="1"/><line x1="1120263.1" y1="17247.0" x2="985.3" y2="307.9" stroke="#f4f8fd" stroke-width="1.35" opacity="1"/><line x1="-98388.0" y1="1784.0" x2="1011.7" y2="307.9" stroke="#f4f8fd" stroke-width="1.35" opacity="1"/><line x1="1133120.6" y1="17247.0" x2="988.0" y2="307.9" stroke="#f4f8fd" stroke-width="1.35" opacity="1"/><line x1="-44289.5" y1="972.9" x2="1009.0" y2="307.9" stroke="#f4f8fd" stroke-width="1.35" opacity="1"/><line x1="1145978.0" y1="17247.0" x2="990.7" y2="307.8" stroke="#f4f8fd" stroke-width="1.35" opacity="1"/><line x1="-28444.0" y1="735.4" x2="1006.4" y2="307.8" stroke="#f4f8fd" stroke-width="1.35" opacity="1"/><line x1="98516.5" y1="1734.6" x2="993.3" y2="307.8" stroke="#f4f8fd" stroke-width="1.35" opacity="1"/><line x1="-20876.2" y1="621.9" x2="1003.7" y2="307.8" stroke="#f4f8fd" stroke-width="1.35" opacity="1"/><line x1="46667.5" y1="968.6" x2="995.9" y2="307.8" stroke="#f4f8fd" stroke-width="1.35" opacity="1"/><line x1="-16443.1" y1="555.4" x2="1001.1" y2="307.8" stroke="#f4f8fd" stroke-width="1.35" opacity="1"/><line x1="30930.3" y1="736.1" x2="998.5" y2="307.7" stroke="#f4f8fd" stroke-width="1.35" opacity="1"/><line x1="-13531.1" y1="511.8" x2="998.5" y2="307.7" stroke="#f4f8fd" stroke-width="1.35" opacity="1"/><line x1="-28238.2" y1="17247.0" x2="1453.8" y2="314.2" stroke="#f57a80" stroke-width="1.9" opacity="1"/><line x1="27380.1" y1="17247.0" x2="549.6" y2="314.0" stroke="#3cc2ff" stroke-width="1.7" opacity="1"/></g></g><defs><linearGradient id="haze" x1="0" y1="0" x2="0" y2="1"><stop offset="0" stop-color="#fff" stop-opacity="0"/><stop offset="0.18" stop-color="#fff" stop-opacity="0.04"/><stop offset="0.45" stop-color="#fff" stop-opacity="0.03"/><stop offset="1" stop-color="#fff" stop-opacity="0"/></linearGradient></defs><rect x="423" y="308" width="1144" height="110" fill="url(#haze)"/><rect x="423" y="159" width="1144" height="530" fill="url(#hz)"/><defs>
<linearGradient id="hood" x1="0" y1="0" x2="1" y2="0.3"><stop offset="0" stop-color="#b5652f"/><stop offset="0.35" stop-color="#8d4f30"/><stop offset="0.7" stop-color="#a75e35"/><stop offset="1" stop-color="#b86a33"/></linearGradient>
<linearGradient id="skin" x1="0" y1="0" x2="1" y2="0"><stop offset="0" stop-color="#8f929c"/><stop offset="1" stop-color="#b4b6c0"/></linearGradient>
</defs><g transform="translate(880,270) scale(0.19743)"><path d="M430,870 Q470,900 500,955 Q420,1010 350,1050 Q300,1090 255,1135 L212,1102 Q260,1040 310,1000 Q370,950 400,900 Z" fill="#9a9ca5"/><path d="M300,1010 L350,1050 L255,1135 L212,1102 Z" fill="#b9bac2"/><g transform="rotate(-12 190 1165)"><path d="M150,1085 Q190,1065 232,1090 Q248,1170 238,1235 Q200,1268 160,1245 Q135,1160 150,1085 Z" fill="#b85f2b"/><path d="M185,1150 Q225,1135 240,1160 Q245,1215 235,1238 Q205,1262 178,1240 Q170,1190 185,1150 Z" fill="#cfcbcd"/><path d="M196,1080 Q222,1075 232,1095 L236,1140 Q215,1130 200,1140 Z" fill="#dedbdc"/><path d="M150,1085 Q140,1160 160,1245 L172,1240 Q158,1160 166,1090 Z" fill="#8f4a24"/></g><path d="M505,940 Q560,905 615,915 Q660,960 688,1020 Q690,1050 672,1068 Q560,1140 455,1205 L418,1160 Q500,1100 562,1052 Q540,1000 505,940 Z" fill="url(#skin)"/><path d="M520,1080 L575,1125 L455,1205 L418,1160 Z" fill="#c3c4cb"/><g transform="rotate(-12 400 1240)"><path d="M352,1140 Q400,1118 452,1150 Q470,1240 458,1320 Q415,1360 368,1335 Q335,1230 352,1140 Z" fill="#b85f2b"/><path d="M392,1225 Q440,1205 460,1235 Q466,1300 455,1325 Q420,1352 388,1330 Q378,1270 392,1225 Z" fill="#d5d2d3"/><path d="M405,1135 Q438,1130 450,1152 L456,1205 Q430,1192 410,1205 Z" fill="#e2dfe0"/><path d="M352,1140 Q338,1230 368,1335 L382,1330 Q360,1230 370,1146 Z" fill="#8f4a24"/></g><path d="M428,858 L525,795 L612,838 L624,872 L600,906 L560,890 L522,956 L470,950 Z" fill="#3f3f43"/><path d="M470,950 L522,956 L540,920 L455,905 Z" fill="#2f2f33"/><path d="M515,805 L545,800 L624,930 L598,946 Z" fill="#a4572c"/><rect x="588" y="905" width="26" height="26" fill="#d8d2c4" transform="rotate(-28 600 918)"/><path d="M520,330 L600,330 L612,402 L540,408 Z" fill="#9da0aa"/><path d="M385,400 Q420,360 470,362 Q520,365 545,392 Q600,405 655,385 L650,420 Q560,440 500,430 Q430,430 385,400 Z" fill="#a85c2e"/><path d="M392,398 Q450,380 520,392 L560,412 L648,390 Q690,440 705,490 Q725,530 722,548 L655,640 L640,790 Q625,825 600,834 L520,802 L420,874 Q385,840 372,800 L352,744 Q310,760 275,746 Q240,710 246,665 Q250,580 268,522 Q290,470 330,450 Z" fill="url(#hood)"/><path d="M268,522 Q250,580 246,665 Q240,710 275,746 Q310,760 352,744 L380,640 L395,545 Q340,480 268,522 Z" fill="#b5642f"/><path d="M395,545 L425,548 L432,700 L352,744 L380,640 Z" fill="#7d452b" opacity="0.85"/><path d="M648,390 Q690,440 705,490 Q725,530 722,548 L655,640 L648,560 Q640,470 600,420 Z" fill="#c06e36" opacity="0.7"/><path d="M640,600 Q655,555 700,552 Q760,535 800,548 Q830,580 815,630 Q780,668 720,668 Q670,672 640,650 Z" fill="#b06231"/><path d="M745,545 Q800,535 822,575 Q830,620 805,650 Q770,660 745,640 Q725,590 745,545 Z" fill="#97512b"/><path d="M758,572 Q790,550 818,572 Q832,600 818,626 Q790,640 765,622 Q748,598 758,572 Z" fill="#cfcfd5"/><path d="M285,752 Q318,728 350,748 Q362,780 345,802 Q315,812 292,798 Q276,775 285,752 Z" fill="#d2d3d9"/><circle cx="520" cy="590" r="38" fill="#3f3a38"/><path d="M528,640 Q545,590 600,592 Q650,600 645,655 Q640,700 600,715 Q545,715 528,680 Z" fill="#bf8a6c"/><ellipse cx="590" cy="706" rx="32" ry="17" fill="#ddd0ca"/><path d="M560,650 a14,9 0 1 0 28,0 a14,9 0 1 0 -28,0 M596,648 a14,9 0 1 0 28,0 a14,9 0 1 0 -28,0" fill="none" stroke="#4a4040" stroke-width="4"/><path d="M545,420 Q580,520 580,600 M600,420 Q640,520 645,600" stroke="#3b3d44" stroke-width="5" fill="none"/><path d="M528,250 Q530,200 600,190 Q668,200 672,262 Q672,310 655,338 Q635,360 612,352 Q560,335 535,300 Z" fill="#a9acb7"/><path d="M528,250 Q535,300 560,332 L600,350 Q560,300 556,240 Z" fill="#8f929d"/><ellipse cx="518" cy="300" rx="12" ry="22" fill="#9a9da8"/><circle cx="470" cy="128" r="44" fill="#37383a"/><circle cx="607" cy="112" r="36" fill="#2f3032"/><path d="M492,262 Q468,150 560,108 Q655,92 688,180 Q698,228 676,250 Q660,222 640,212 Q632,240 618,222 Q600,208 588,232 Q560,236 548,300 Q525,335 512,292 Z" fill="#333436"/><rect x="484" y="122" width="30" height="58" rx="10" fill="#b55f2a" transform="rotate(20 499 150)"/><path d="M592,268 Q610,258 630,264 M644,262 Q655,256 666,260" stroke="#3a3a40" stroke-width="6" fill="none"/><ellipse cx="614" cy="284" rx="12" ry="6" fill="#33343a"/><ellipse cx="656" cy="280" rx="8" ry="5" fill="#33343a"/><path d="M622,338 Q634,340 644,336" stroke="#806f78" stroke-width="5" fill="none"/></g><g>
<line x1="1457" y1="208" x2="1457" y2="269" stroke="#45b266" stroke-width="3.6"/>
<line x1="1456.5" y1="269" x2="1505" y2="256.5" stroke="#dd4439" stroke-width="3.8" stroke-linecap="round"/>
<line x1="1456.5" y1="269" x2="1502" y2="281" stroke="#2f7be6" stroke-width="3.8" stroke-linecap="round"/>
<circle cx="1457" cy="196" r="12" fill="#86c86f"/>
<circle cx="1510.5" cy="255.3" r="12" fill="#e8828f"/>
<circle cx="1509.6" cy="282.3" r="12" fill="#6ea4d8" opacity="0.85"/>
<circle cx="1404.3" cy="255" r="12" fill="#4a96e6"/>
<circle cx="1403.6" cy="282.3" r="12" fill="#c489a6"/>
<circle cx="1456.7" cy="341.3" r="12" fill="#86c86f"/>
<g font-family="Liberation Sans, sans-serif" font-weight="bold" font-size="17" text-anchor="middle">
<text x="1457" y="202" fill="#5a6268">Y</text><text x="1510.5" y="261.5" fill="#3f5a62">X</text><text x="1509.6" y="288.5" fill="#5f7c92">Z</text></g>
</g></svg>
<div style="left:-2px;top:56.5px;width:167px;height:49.5px;background:#242424;"></div>
<div style="left:0px;top:58.5px;width:163px;height:47.5px;background:#37383a;"></div>
<svg style="left:7px;top:67px;" width="28" height="28" viewBox="0 0 28 28"><polygon points="14,13.8 26.2,20 14,26.2 1.8000000000000007,20" fill="#7e7f9e" stroke="#7e7f9e" stroke-width="2" stroke-linejoin="round"/><polygon points="14,9.0 26.6,15.4 14,21.8 1.4000000000000004,15.4" fill="#37383a" stroke="#37383a" stroke-width="2.2" stroke-linejoin="round"/><polygon points="14,7.3999999999999995 26.2,13.6 14,19.8 1.8000000000000007,13.6" fill="#9db3e0" stroke="#9db3e0" stroke-width="2" stroke-linejoin="round"/><polygon points="14,3.0 26.6,9.4 14,15.8 1.4000000000000004,9.4" fill="#37383a" stroke="#37383a" stroke-width="2.2" stroke-linejoin="round"/><polygon points="14,1.5999999999999996 26.2,7.8 14,14.0 1.8000000000000007,7.8" fill="#c9ccfd" stroke="#c9ccfd" stroke-width="2" stroke-linejoin="round"/></svg>
<div class="t" style="left:45px;top:66.0px;font-size:24px;line-height:32px;color:#ffffff;">Hierarchy</div>
<svg style="left:383px;top:71px;" width="16" height="20" viewBox="0 0 16 20"><g stroke="#c8c8c8" stroke-width="2.7" stroke-linecap="round"><line x1="2" y1="2.3" x2="14" y2="2.3"/><line x1="2" y1="10" x2="14" y2="10"/><line x1="2" y1="17.7" x2="14" y2="17.7"/></g></svg>
<div style="left:0px;top:104px;width:413px;height:53px;background:#37383a;"></div>
<div style="left:0px;top:156px;width:413px;height:2px;background:#2b2b2c;"></div>
<svg style="left:11.0px;top:119.0px;" width="24" height="24" viewBox="0 0 24 24"><g stroke="#c8c8c8" stroke-width="3" stroke-linecap="round"><line x1="1.5" y1="12.0" x2="22.5" y2="12.0"/><line x1="12.0" y1="1.5" x2="12.0" y2="22.5"/></g></svg>
<div style="left:55px;top:115px;width:294px;height:32px;background:#424242;"></div>
<svg style="left:60px;top:121px;" width="24" height="24" viewBox="0 0 24 24"><circle cx="9.5" cy="9.5" r="7" fill="none" stroke="#c4c4c4" stroke-width="2.6"/><line x1="14.8" y1="14.8" x2="21.5" y2="21.5" stroke="#c4c4c4" stroke-width="3.2" stroke-linecap="round"/></svg>
<svg style="left:371px;top:115px;" width="32" height="32" viewBox="0 0 32 32"><rect x="1.2" y="1.2" width="21" height="21" rx="5" fill="none" stroke="#c4c4c4" stroke-width="2"/><rect x="8.5" y="8.5" width="22" height="22" rx="5" fill="#37383a" stroke="#c4c4c4" stroke-width="2"/><line x1="14.5" y1="19.6" x2="24.5" y2="19.6" stroke="#c4c4c4" stroke-width="2.2"/></svg>
<svg style="left:5px;top:173px;" width="20" height="12" viewBox="0 0 20 12"><polygon points="0,0.5 20,0.5 10,11.5" fill="#bdbdbd"/></svg>
<svg style="left:33px;top:166px;" width="32" height="32" viewBox="0 0 32 32"><polygon points="16,1 28.5,7.5 16,14 3.5,7.5" fill="#a6e6ea"/>
<polygon points="3.5,8.8 15.3,15 15.3,28 3.5,21.5" fill="#8fdfe6"/><polygon points="28.5,8.8 16.7,15 16.7,28 28.5,21.5" fill="#9fe4ea"/>
<polyline points="1,19 16,30.5 31,19" fill="none" stroke="#5f8fb0" stroke-width="1.6"/></svg>
<div class="t" style="left:75px;top:166.0px;font-size:24px;line-height:32px;color:#d2d2d2;">Scene3D</div>
<svg style="left:63px;top:213px;" width="32" height="28" viewBox="0 0 32 28"><ellipse cx="20" cy="4.5" rx="4.6" ry="3.2" fill="#9aa852"/>
<path d="M9,9 Q9,3.5 15,4.5 L17,5 L17,8 L13,7.5 Q12,7.5 12,9 Z" fill="#d9df83"/>
<path d="M1,12 Q1,9 4,9 L21,9 Q23.5,9 23.5,12 L23.5,13.5 L30.5,10 L30.5,23.5 L23.5,20 L23.5,24 Q23.5,27 20.5,27 L4,27 Q1,27 1,24 Z" fill="#d9df83"/>
<ellipse cx="7.5" cy="13.5" rx="3.4" ry="1.6" fill="#3a3b33"/><circle cx="14" cy="13" r="1.3" fill="#3a3b33"/></svg>
<div class="t" style="left:105px;top:210.0px;font-size:24px;line-height:32px;color:#d2d2d2;">Main Camera</div>
<svg style="left:65px;top:257px;" width="28" height="30" viewBox="0 0 28 30"><polygon points="13,0.5 26,6.5 14,13 1,7" fill="#6bd6fb"/>
<polygon points="1,8.2 13.3,14.2 13.3,29 1,23" fill="#62a2d8"/><polygon points="26,7.8 14.6,14 14.6,29 26,22.5" fill="#71c3ea"/>
<polyline points="7.5,3.3 20,9.8 20,26" fill="none" stroke="#37383a" stroke-width="1.6"/></svg>
<div class="t" style="left:105px;top:254.0px;font-size:24px;line-height:32px;color:#d2d2d2;">Direction Light</div>
<svg style="left:35px;top:305px;" width="20" height="12" viewBox="0 0 20 12"><polygon points="0,0.5 20,0.5 10,11.5" fill="#bdbdbd"/></svg>
<svg style="left:65px;top:299px;" width="28" height="31" viewBox="0 0 28 31"><polygon points="13.5,0.5 27,7 14,14 0.5,7.5" fill="#f2c878"/>
<polygon points="0.5,8.8 13.3,15.2 13.3,30.5 0.5,24" fill="#d4a358"/><polygon points="27,8.3 14.7,15 14.7,30.5 27,23.8" fill="#e9bd70"/>
<polyline points="20.5,3.8 7,10.8 7,27" fill="none" stroke="#3b3634" stroke-width="1.7"/><line x1="1" y1="13.5" x2="13" y2="19.5" stroke="#3b3634" stroke-width="1.4"/></svg>
<div class="t" style="left:105px;top:298.0px;font-size:24px;line-height:32px;color:#4db894;">girl</div>
<svg style="left:70px;top:348.5px;" width="14" height="20" viewBox="0 0 14 20"><polygon points="0.5,0 13.5,10 0.5,20" fill="#bdbdbd"/></svg>
<svg style="left:95px;top:345px;" width="28" height="30" viewBox="0 0 28 30"><polygon points="13,0.5 26,6.5 14,13 1,7" fill="#6bd6fb"/>
<polygon points="1,8.2 13.3,14.2 13.3,29 1,23" fill="#62a2d8"/><polygon points="26,7.8 14.6,14 14.6,29 26,22.5" fill="#71c3ea"/>
<polyline points="7.5,3.3 20,9.8 20,26" fill="none" stroke="#37383a" stroke-width="1.6"/></svg>
<div class="t" style="left:135px;top:342.0px;font-size:24px;line-height:32px;color:#4db894;">Bip001</div>
<svg style="left:95px;top:389px;" width="28" height="30" viewBox="0 0 28 30"><polygon points="13,0.5 26,6.5 14,13 1,7" fill="#6bd6fb"/>
<polygon points="1,8.2 13.3,14.2 13.3,29 1,23" fill="#62a2d8"/><polygon points="26,7.8 14.6,14 14.6,29 26,22.5" fill="#71c3ea"/>
<polyline points="7.5,3.3 20,9.8 20,26" fill="none" stroke="#37383a" stroke-width="1.6"/></svg>
<div class="t" style="left:135px;top:386.0px;font-size:24px;line-height:32px;color:#4db894;">hair21_f001</div>
<svg style="left:33px;top:430px;" width="32" height="32" viewBox="0 0 32 32"><polygon points="16,1 28.5,7.5 16,14 3.5,7.5" fill="#a6e6ea"/>
<polygon points="3.5,8.8 15.3,15 15.3,28 3.5,21.5" fill="#8fdfe6"/><polygon points="28.5,8.8 16.7,15 16.7,28 28.5,21.5" fill="#9fe4ea"/>
<polyline points="1,19 16,30.5 31,19" fill="none" stroke="#5f8fb0" stroke-width="1.6"/></svg>
<div class="t" style="left:75px;top:430.0px;font-size:24px;line-height:32px;color:#d2d2d2;">Scene2D</div>
<div style="left:135px;top:632.5px;width:154px;height:48.5px;background:#242424;"></div>
<div style="left:137px;top:634.5px;width:150px;height:44.5px;background:#2f2f2f;"></div>
<svg style="left:147px;top:643px;" width="30" height="28" viewBox="0 0 30 28"><path d="M15,2 L18.8,10 L27.5,11.2 L21.2,17.3 L22.8,26 L15,21.8 L7.2,26 L8.8,17.3 L2.5,11.2 L11.2,10 Z" fill="#c7cbfd" stroke="#c7cbfd" stroke-width="3" stroke-linejoin="round"/><line x1="16.5" y1="8" x2="19.5" y2="11.5" stroke="#fff" stroke-width="1.4" stroke-linecap="round"/></svg>
<div class="t" style="left:185px;top:642.0px;font-size:24px;line-height:32px;color:#bdbdbd;">Widgets</div>
<div style="left:-2px;top:632.5px;width:138px;height:49.5px;background:#242424;"></div>
<div style="left:0px;top:634.5px;width:134px;height:47.5px;background:#37383a;"></div>
<svg style="left:6px;top:644px;" width="30" height="28" viewBox="0 0 30 28"><path d="M1.5,11 L15,1.5 L28.5,11" fill="none" stroke="#c7cbfd" stroke-width="2.2" stroke-linecap="round" stroke-linejoin="round"/>
<path d="M5,11.5 L15,5 L25,11.5 L25,25 Q25,26.5 23.5,26.5 L6.5,26.5 Q5,26.5 5,25 Z" fill="#c7cbfd"/>
<g fill="#37383a"><rect x="8.5" y="14.5" width="4.6" height="4.3"/><rect x="14.6" y="14.5" width="4.6" height="4.3"/><rect x="8.5" y="20.3" width="4.6" height="4.3"/><rect x="14.6" y="20.3" width="4.6" height="4.3"/><rect x="20.6" y="20.3" width="2.6" height="4.3"/></g></svg>
<div class="t" style="left:45px;top:642.0px;font-size:24px;line-height:32px;color:#ffffff;">Project</div>
<svg style="left:383px;top:647.5px;" width="16" height="20" viewBox="0 0 16 20"><g stroke="#c8c8c8" stroke-width="2.7" stroke-linecap="round"><line x1="2" y1="2.3" x2="14" y2="2.3"/><line x1="2" y1="10" x2="14" y2="10"/><line x1="2" y1="17.7" x2="14" y2="17.7"/></g></svg>
<div style="left:0px;top:681px;width:413px;height:53px;background:#37383a;"></div>
<div style="left:0px;top:733px;width:413px;height:2px;background:#2b2b2c;"></div>
<svg style="left:15.0px;top:695.5px;" width="24" height="24" viewBox="0 0 24 24"><g stroke="#c8c8c8" stroke-width="3" stroke-linecap="round"><line x1="1.5" y1="12.0" x2="22.5" y2="12.0"/><line x1="12.0" y1="1.5" x2="12.0" y2="22.5"/></g></svg>
<div style="left:55px;top:691px;width:206px;height:32px;background:#424242;"></div>
<svg style="left:60px;top:697px;" width="24" height="24" viewBox="0 0 24 24"><circle cx="9.5" cy="9.5" r="7" fill="none" stroke="#c4c4c4" stroke-width="2.6"/><line x1="14.8" y1="14.8" x2="21.5" y2="21.5" stroke="#c4c4c4" stroke-width="3.2" stroke-linecap="round"/></svg>
<svg style="left:277px;top:693px;" width="28" height="28" viewBox="0 0 28 28"><path d="M2,2.2 L26,2.2 L17,13 L17,26 L11.5,22.5 L11.5,13 Z" fill="none" stroke="#c4c4c4" stroke-width="2" stroke-linejoin="round"/></svg>
<svg style="left:324px;top:692px;" width="30" height="30" viewBox="0 0 30 30"><rect x="2" y="2" width="10.5" height="26" rx="1.5" fill="none" stroke="#c4c4c4" stroke-width="2"/><rect x="17.5" y="2" width="10.5" height="26" rx="1.5" fill="none" stroke="#c4c4c4" stroke-width="2"/></svg>
<svg style="left:371px;top:691px;" width="32" height="32" viewBox="0 0 32 32"><rect x="1.2" y="1.2" width="21" height="21" rx="5" fill="none" stroke="#c4c4c4" stroke-width="2"/><rect x="8.5" y="8.5" width="22" height="22" rx="5" fill="#37383a" stroke="#c4c4c4" stroke-width="2"/><line x1="14.5" y1="19.6" x2="24.5" y2="19.6" stroke="#c4c4c4" stroke-width="2.2"/></svg>
<div style="left:391px;top:737px;width:21px;height:594px;background:#4b4b4b;border-radius:10px;"></div>
<svg style="left:0px;top:750px;" width="20" height="12" viewBox="0 0 20 12"><polygon points="0,0.5 20,0.5 10,11.5" fill="#bdbdbd"/></svg>
<svg style="left:26px;top:746px;" width="35" height="30" viewBox="0 0 35 30"><path d="M14,6 L16.5,1.5 L29,0.5 L30,12 L14,12 Z" fill="#5cc0cc"/><path d="M18,3.5 L27.5,2.7 L27.8,6" fill="none" stroke="#37383a" stroke-width="1"/>
<path d="M0.5,10 L31,7 L31,24 L5,25.5 Z" fill="#73d6df"/>
<rect x="10.5" y="13" width="24" height="16.5" rx="1" fill="#3fae8c"/>
<polygon points="13,27.5 19.5,18.5 24,24.5 26.5,21.5 31.5,27.5" fill="#fff"/><circle cx="29" cy="17" r="1.8" fill="#fff"/></svg>
<div class="t" style="left:67px;top:742.0px;font-size:24px;line-height:32px;color:#d2d2d2;">assets</div>
<svg style="left:34px;top:792.5px;" width="14" height="20" viewBox="0 0 14 20"><polygon points="0.5,0 13.5,10 0.5,20" fill="#bdbdbd"/></svg>
<svg style="left:59px;top:791px;" width="30" height="25" viewBox="0 0 30 25"><path d="M1,5.5 L15,5.5 L18,0.5 L28,0.5 Q29,0.5 29,1.5 L29,23 Q29,24 28,24 L2,24 Q1,24 1,23 Z" fill="#c4924f"/><path d="M19.5,2.2 L27,2.2 L27,5" fill="none" stroke="#8a6536" stroke-width="1"/></svg>
<div class="t" style="left:97px;top:786.0px;font-size:24px;line-height:32px;color:#d2d2d2;">comp</div>
<svg style="left:29px;top:839px;" width="20" height="12" viewBox="0 0 20 12"><polygon points="0,0.5 20,0.5 10,11.5" fill="#bdbdbd"/></svg>
<svg style="left:55.5px;top:834px;" width="34" height="27" viewBox="0 0 34 27"><path d="M5,6 L17.5,6 L20,1 L30.5,1 L30.5,25 L5,25 Z" fill="#b88a4a"/><path d="M21.5,2.6 L29,2.6 L29,6.5" fill="none" stroke="#3a352c" stroke-width="1"/><path d="M0.5,9.8 L29,9.8 L32.5,25.5 L4.5,25.5 Z" fill="#e9c98c"/><path d="M6.5,8.2 L30,8.2" stroke="#3a352c" stroke-width="1"/></svg>
<div class="t" style="left:97px;top:830.0px;font-size:24px;line-height:32px;color:#d2d2d2;">girl</div>
<svg style="left:64px;top:880.5px;" width="14" height="20" viewBox="0 0 14 20"><polygon points="0.5,0 13.5,10 0.5,20" fill="#bdbdbd"/></svg>
<svg style="left:89px;top:879px;" width="30" height="25" viewBox="0 0 30 25"><path d="M1,5.5 L15,5.5 L18,0.5 L28,0.5 Q29,0.5 29,1.5 L29,23 Q29,24 28,24 L2,24 Q1,24 1,23 Z" fill="#c4924f"/><path d="M19.5,2.2 L27,2.2 L27,5" fill="none" stroke="#8a6536" stroke-width="1"/></svg>
<div class="t" style="left:127px;top:874.0px;font-size:24px;line-height:32px;color:#d2d2d2;">material</div>
<svg style="left:64px;top:924.5px;" width="14" height="20" viewBox="0 0 14 20"><polygon points="0.5,0 13.5,10 0.5,20" fill="#bdbdbd"/></svg>
<svg style="left:89px;top:923px;" width="30" height="25" viewBox="0 0 30 25"><path d="M1,5.5 L15,5.5 L18,0.5 L28,0.5 Q29,0.5 29,1.5 L29,23 Q29,24 28,24 L2,24 Q1,24 1,23 Z" fill="#c4924f"/><path d="M19.5,2.2 L27,2.2 L27,5" fill="none" stroke="#8a6536" stroke-width="1"/></svg>
<div class="t" style="left:127px;top:918.0px;font-size:24px;line-height:32px;color:#d2d2d2;">texture</div>
<svg style="left:88px;top:964px;" width="31" height="31" viewBox="0 0 31 31"><g fill="#c5c6fb"><rect x="0.5" y="0.8" width="8.6" height="8.6" rx="2"/><rect x="21.4" y="0.8" width="8.6" height="8.6" rx="2"/><rect x="0.5" y="21.4" width="8.6" height="8.6" rx="2"/><rect x="21.4" y="21.4" width="8.6" height="8.6" rx="2"/></g>
<g stroke="#c5c6fb" stroke-width="1.5"><line x1="9" y1="5" x2="22" y2="5"/><line x1="9" y1="25.8" x2="22" y2="25.8"/><line x1="25.6" y1="9" x2="25.6" y2="22"/></g>
<g fill="#c5c6fb"><polygon points="13,5 16,3 16,7"/><polygon points="13,25.8 16,23.8 16,27.8"/><polygon points="25.6,17 23.8,14 27.4,14"/></g>
<text x="13.5" y="21.3" font-family="Liberation Sans, sans-serif" font-size="14.5" fill="#fff" text-anchor="middle">3D</text></svg>
<div class="t" style="left:127px;top:962.0px;font-size:24px;line-height:32px;color:#d2d2d2;">AnimationController</div>
<svg style="left:64px;top:1012.5px;" width="14" height="20" viewBox="0 0 14 20"><polygon points="0.5,0 13.5,10 0.5,20" fill="#bdbdbd"/></svg>
<svg style="left:88px;top:1007.5px;" width="31" height="31" viewBox="0 0 31 31"><path d="M5,1 L20,1 L28.5,9.5 L28.5,27 Q28.5,30 25.5,30 L8,30 Q5,30 5,27 Z" fill="#37383a" stroke="#c0bfee" stroke-width="1.7"/>
<path d="M19.5,1.5 L19.5,10 L28,10" fill="none" stroke="#c0bfee" stroke-width="1.7"/>
<rect x="0.5" y="12" width="25.5" height="13.5" rx="2.5" fill="#8886b4"/>
<text x="13.3" y="23" font-family="Liberation Sans, sans-serif" font-size="11" font-weight="bold" fill="#fff" text-anchor="middle" textLength="21" lengthAdjust="spacingAndGlyphs">FBX</text></svg>
<div class="t" style="left:127px;top:1006.0px;font-size:24px;line-height:32px;color:#d2d2d2;">girl</div>
<svg style="left:60px;top:1058px;" width="20" height="12" viewBox="0 0 20 12"><polygon points="0,0.5 20,0.5 10,11.5" fill="#bdbdbd"/></svg>
<svg style="left:88px;top:1051.5px;" width="31" height="31" viewBox="0 0 31 31"><path d="M5,1 L20,1 L28.5,9.5 L28.5,27 Q28.5,30 25.5,30 L8,30 Q5,30 5,27 Z" fill="#37383a" stroke="#c0bfee" stroke-width="1.7"/>
<path d="M19.5,1.5 L19.5,10 L28,10" fill="none" stroke="#c0bfee" stroke-width="1.7"/>
<rect x="0.5" y="12" width="25.5" height="13.5" rx="2.5" fill="#8886b4"/>
<text x="13.3" y="23" font-family="Liberation Sans, sans-serif" font-size="11" font-weight="bold" fill="#fff" text-anchor="middle" textLength="21" lengthAdjust="spacingAndGlyphs">FBX</text></svg>
<div class="t" style="left:127px;top:1050.0px;font-size:24px;line-height:32px;color:#d2d2d2;">girl_idle01</div>
<svg style="left:119.5px;top:1095.5px;" width="28" height="31" viewBox="0 0 28 31"><polygon points="13.5,0.5 27,7 14,14 0.5,7.5" fill="#f2c878"/>
<polygon points="0.5,8.8 13.3,15.2 13.3,30.5 0.5,24" fill="#d4a358"/><polygon points="27,8.3 14.7,15 14.7,30.5 27,23.8" fill="#e9bd70"/>
<polyline points="20.5,3.8 7,10.8 7,27" fill="none" stroke="#3b3634" stroke-width="1.7"/><line x1="1" y1="13.5" x2="13" y2="19.5" stroke="#3b3634" stroke-width="1.4"/></svg>
<div class="t" style="left:157px;top:1094.0px;font-size:24px;line-height:32px;color:#d2d2d2;">girl_idle01</div>
<svg style="left:117.7px;top:1141.8px;" width="30.7175" height="29.042" viewBox="240 248 505 478"><g fill="none" stroke="#6fdcf7" stroke-linecap="round" stroke-linejoin="round">
<circle cx="585" cy="300" r="44" fill="#6fdcf7" stroke="none"/>
<path d="M545,372 L478,515" stroke-width="92"/>
<path d="M560,385 L645,385 L712,338" stroke-width="46"/>
<path d="M520,348 L410,350 L350,398" stroke-width="46"/>
<path d="M480,520 L572,590 L620,672" stroke-width="52"/>
<path d="M465,510 L385,560 L275,548" stroke-width="52"/>
<path d="M345,635 L428,635 M390,690 L535,690" stroke-width="30" stroke-linecap="butt"/>
<path d="M285,465 L380,465" stroke-width="24" stroke="#5aa6de" stroke-linecap="butt"/></g></svg>
<div class="t" style="left:157px;top:1138.0px;font-size:24px;line-height:32px;color:#d2d2d2;">Take_001</div>
<svg style="left:60px;top:1190px;" width="20" height="12" viewBox="0 0 20 12"><polygon points="0,0.5 20,0.5 10,11.5" fill="#bdbdbd"/></svg>
<svg style="left:88px;top:1183.5px;" width="31" height="31" viewBox="0 0 31 31"><path d="M5,1 L20,1 L28.5,9.5 L28.5,27 Q28.5,30 25.5,30 L8,30 Q5,30 5,27 Z" fill="#37383a" stroke="#c0bfee" stroke-width="1.7"/>
<path d="M19.5,1.5 L19.5,10 L28,10" fill="none" stroke="#c0bfee" stroke-width="1.7"/>
<rect x="0.5" y="12" width="25.5" height="13.5" rx="2.5" fill="#8886b4"/>
<text x="13.3" y="23" font-family="Liberation Sans, sans-serif" font-size="11" font-weight="bold" fill="#fff" text-anchor="middle" textLength="21" lengthAdjust="spacingAndGlyphs">FBX</text></svg>
<div class="t" style="left:127px;top:1182.0px;font-size:24px;line-height:32px;color:#d2d2d2;">girl_run01</div>
<svg style="left:119.5px;top:1227.5px;" width="28" height="31" viewBox="0 0 28 31"><polygon points="13.5,0.5 27,7 14,14 0.5,7.5" fill="#f2c878"/>
<polygon points="0.5,8.8 13.3,15.2 13.3,30.5 0.5,24" fill="#d4a358"/><polygon points="27,8.3 14.7,15 14.7,30.5 27,23.8" fill="#e9bd70"/>
<polyline points="20.5,3.8 7,10.8 7,27" fill="none" stroke="#3b3634" stroke-width="1.7"/><line x1="1" y1="13.5" x2="13" y2="19.5" stroke="#3b3634" stroke-width="1.4"/></svg>
<div class="t" style="left:157px;top:1226.0px;font-size:24px;line-height:32px;color:#d2d2d2;">girl_run01</div>
<svg style="left:117.7px;top:1273.8px;" width="30.7175" height="29.042" viewBox="240 248 505 478"><g fill="none" stroke="#6fdcf7" stroke-linecap="round" stroke-linejoin="round">
<circle cx="585" cy="300" r="44" fill="#6fdcf7" stroke="none"/>
<path d="M545,372 L478,515" stroke-width="92"/>
<path d="M560,385 L645,385 L712,338" stroke-width="46"/>
<path d="M520,348 L410,350 L350,398" stroke-width="46"/>
<path d="M480,520 L572,590 L620,672" stroke-width="52"/>
<path d="M465,510 L385,560 L275,548" stroke-width="52"/>
<path d="M345,635 L428,635 M390,690 L535,690" stroke-width="30" stroke-linecap="butt"/>
<path d="M285,465 L380,465" stroke-width="24" stroke="#5aa6de" stroke-linecap="butt"/></g></svg>
<div class="t" style="left:157px;top:1270.0px;font-size:24px;line-height:32px;color:#d2d2d2;">Take_001</div>
<svg style="left:34px;top:1320.5px;" width="14" height="20" viewBox="0 0 14 20"><polygon points="0.5,0 13.5,10 0.5,20" fill="#bdbdbd"/></svg>
<svg style="left:59px;top:1319px;" width="30" height="25" viewBox="0 0 30 25"><path d="M1,5.5 L15,5.5 L18,0.5 L28,0.5 Q29,0.5 29,1.5 L29,23 Q29,24 28,24 L2,24 Q1,24 1,23 Z" fill="#c4924f"/><path d="M19.5,2.2 L27,2.2 L27,5" fill="none" stroke="#8a6536" stroke-width="1"/></svg>
<div class="t" style="left:97px;top:1314.0px;font-size:24px;line-height:32px;color:#d2d2d2;">LayaMonkey</div>
<svg style="left:34px;top:1364.5px;" width="14" height="20" viewBox="0 0 14 20"><polygon points="0.5,0 13.5,10 0.5,20" fill="#bdbdbd"/></svg>
<svg style="left:59px;top:1363px;" width="30" height="25" viewBox="0 0 30 25"><path d="M1,5.5 L15,5.5 L18,0.5 L28,0.5 Q29,0.5 29,1.5 L29,23 Q29,24 28,24 L2,24 Q1,24 1,23 Z" fill="#c4924f"/><path d="M19.5,2.2 L27,2.2 L27,5" fill="none" stroke="#8a6536" stroke-width="1"/></svg>
<div class="t" style="left:97px;top:1358.0px;font-size:24px;line-height:32px;color:#d2d2d2;">others</div>
<svg style="left:56px;top:1402px;" width="34" height="34" viewBox="0 0 34 34"><polygon points="17,1 31,9 31,25 17,33 3,25 3,9" fill="#0c0c0c" stroke="#e8e8e8" stroke-width="1.6"/>
<ellipse cx="17" cy="20" rx="8" ry="7.5" fill="#fff"/><circle cx="17" cy="12.5" r="5" fill="#fff"/><circle cx="11" cy="11" r="2.4" fill="#fff"/><circle cx="23" cy="11" r="2.4" fill="#fff"/></svg>
<div class="t" style="left:97px;top:1402.0px;font-size:24px;line-height:32px;color:#d2d2d2;">Scene</div>
<div style="left:554px;top:56.5px;width:165px;height:48.5px;background:#242424;"></div>
<div style="left:556px;top:58.5px;width:161px;height:44.5px;background:#2f2f2f;"></div>
<svg style="left:567px;top:67px;" width="28" height="28" viewBox="0 0 28 28"><g fill="#c5c6fb"><rect x="0.5" y="1" width="8.5" height="8.5" rx="2"/><rect x="18.5" y="1" width="8.5" height="8.5" rx="2"/><rect x="0.5" y="19" width="8.5" height="8.5" rx="2"/></g><rect x="18.5" y="19" width="8.5" height="8.5" rx="2" fill="#a9cdf0"/>
<g stroke="#c5c6fb" stroke-width="1.6" fill="none"><line x1="9" y1="5" x2="19" y2="5"/><line x1="9" y1="23.5" x2="19" y2="23.5"/><line x1="23" y1="9.5" x2="23" y2="19"/><path d="M9.5,13 L17,13 L11,21"/></g></svg>
<div class="t" style="left:605px;top:66.0px;font-size:24px;line-height:32px;color:#bdbdbd;">Animator</div>
<div style="left:717px;top:56.5px;width:134px;height:48.5px;background:#242424;"></div>
<div style="left:719px;top:58.5px;width:130px;height:44.5px;background:#2f2f2f;"></div>
<svg style="left:728px;top:67px;" width="30" height="28" viewBox="0 0 30 28"><path d="M13,14 L24,6.5 A13,13 0 1 0 24,21.5 Z" fill="#a9b4ee"/><circle cx="14.5" cy="6.8" r="1.7" fill="#fff"/>
<circle cx="24" cy="14" r="1.6" fill="#a9b4ee"/><circle cx="28.3" cy="14" r="1.2" fill="#a9b4ee"/></svg>
<div class="t" style="left:767px;top:66.0px;font-size:24px;line-height:32px;color:#bdbdbd;">Game</div>
<div style="left:849px;top:56.5px;width:237px;height:48.5px;background:#242424;"></div>
<div style="left:851px;top:58.5px;width:233px;height:44.5px;background:#2f2f2f;"></div>
<svg style="left:861px;top:67px;" width="28" height="28" viewBox="0 0 28 28"><g stroke="#c5c6fb" stroke-width="2" stroke-linecap="round" fill="#2f2f2f">
<line x1="1.5" y1="5" x2="26.5" y2="5"/><line x1="1.5" y1="14" x2="26.5" y2="14"/><line x1="1.5" y1="23" x2="26.5" y2="23"/>
<circle cx="20" cy="5" r="3"/><circle cx="10" cy="14" r="3"/><circle cx="19" cy="23" r="3"/></g></svg>
<div class="t" style="left:899px;top:66.0px;font-size:24px;line-height:32px;color:#bdbdbd;">Project Settings</div>
<div style="left:421px;top:56.5px;width:135px;height:49.5px;background:#242424;"></div>
<div style="left:423px;top:58.5px;width:131px;height:47.5px;background:#37383a;"></div>
<svg style="left:433px;top:66px;" width="28" height="30" viewBox="0 0 28 30"><polygon points="14,1 26.5,8 26.5,22 14,29 1.5,22 1.5,8" fill="#646f9c" stroke="#c5c9f3" stroke-width="1.3"/>
<ellipse cx="14" cy="19" rx="7" ry="6.4" fill="#fff"/><circle cx="14" cy="12.3" r="4.4" fill="#fff"/><circle cx="9" cy="10.8" r="2" fill="#fff"/><circle cx="19" cy="10.8" r="2" fill="#fff"/>
<line x1="11.8" y1="16.3" x2="16.2" y2="16.3" stroke="#646f9c" stroke-width="1"/></svg>
<div class="t" style="left:471px;top:66.0px;font-size:24px;line-height:32px;color:#ffffff;">Scene</div>
<svg style="left:1537px;top:71px;" width="16" height="20" viewBox="0 0 16 20"><g stroke="#c8c8c8" stroke-width="2.7" stroke-linecap="round"><line x1="2" y1="2.3" x2="14" y2="2.3"/><line x1="2" y1="10" x2="14" y2="10"/><line x1="2" y1="17.7" x2="14" y2="17.7"/></g></svg>
<div style="left:423px;top:105px;width:1144px;height:54px;background:#2e2e2e;"></div>
<div style="left:435px;top:109px;width:44px;height:44px;background:#222222;border:2px solid #6c6c6c;"></div>
<svg style="left:439.5px;top:112px;" width="34" height="36" viewBox="0 0 34 36"><path d="M10.5,31.5 L8.5,27 L3,18.5 Q2,16 4.2,15.6 Q6,15.6 7.2,17.5 L10.2,21.5 L8.6,8 Q8.6,5.2 10.6,5.2 Q12.4,5.4 12.8,7.8 L14.4,17 L14.8,4.6 Q15,2 17,2 Q19,2.2 19,4.8 L19.4,17 L21.6,6 Q22.2,3.8 24,4.2 Q25.8,4.8 25.4,7.2 L23.6,18.5 L27.2,11.5 Q28.4,9.8 29.8,10.6 Q31,11.6 30.2,13.6 L26,25 L24.5,31.5 Z" fill="none" stroke="#c4c4c4" stroke-width="1.9" stroke-linejoin="round"/></svg>
<svg style="left:486px;top:114px;" width="30" height="30" viewBox="0 0 30 30"><g stroke="#c4c4c4" stroke-width="2" fill="#c4c4c4" stroke-linejoin="round"><line x1="15" y1="5" x2="15" y2="25"/><line x1="5" y1="15" x2="25" y2="15"/>
<polygon points="15,1.5 18.6,6.5 11.4,6.5" stroke-width="1"/><polygon points="15,28.5 18.6,23.5 11.4,23.5" stroke-width="1"/><polygon points="1.5,15 6.5,11.4 6.5,18.6" stroke-width="1"/><polygon points="28.5,15 23.5,11.4 23.5,18.6" stroke-width="1"/></g></svg>
<svg style="left:530px;top:112px;" width="34" height="34" viewBox="0 0 34 34"><g stroke="#c4c4c4" stroke-width="2.1" fill="none" stroke-linecap="round"><path d="M28.5,12.2 Q32.5,14.5 32,17.8 Q30,23.2 17,23.6 Q3,23 2,17.5 Q2.5,12.5 14,11.2 L19,11"/>
<path d="M13.5,9 Q15,2.2 18.5,2.2 Q23.5,3.2 24.6,14"/><path d="M22.3,26 Q21.5,31.5 16.5,31.5"/></g>
<polygon points="10.2,23.3 16.2,19.8 16.2,27" fill="#c4c4c4"/><polygon points="24.8,18.6 21.2,13.2 28,13" fill="#c4c4c4"/></svg>
<svg style="left:578px;top:114px;" width="30" height="30" viewBox="0 0 30 30"><g stroke="#c4c4c4" stroke-width="2" fill="none"><circle cx="15" cy="15" r="5"/>
<line x1="2.5" y1="2.5" x2="8.5" y2="8.5"/><line x1="27.5" y1="2.5" x2="21.5" y2="8.5"/><line x1="2.5" y1="27.5" x2="8.5" y2="21.5"/><line x1="27.5" y1="27.5" x2="21.5" y2="21.5"/>
<polyline points="2,8.5 2,2 8.5,2"/><polyline points="21.5,2 28,2 28,8.5"/><polyline points="2,21.5 2,28 8.5,28"/><polyline points="21.5,28 28,28 28,21.5"/></g></svg>
<svg style="left:622.5px;top:112.6px;" width="32" height="32" viewBox="0 0 32 32"><g stroke="#c4c4c4" stroke-width="1.8" fill="none" stroke-linejoin="miter"><path d="M28.24,21.45 A13.4,13.4 0 0 1 21.45,28.24"/><path d="M10.55,28.24 A13.4,13.4 0 0 1 3.76,21.45"/><path d="M3.76,10.55 A13.4,13.4 0 0 1 10.55,3.76"/><path d="M21.45,3.76 A13.4,13.4 0 0 1 28.24,10.55"/><polyline points="26.60,20.20 30.30,16.00 26.60,11.80"/><polyline points="11.80,26.60 16.00,30.30 20.20,26.60"/><polyline points="5.40,11.80 1.70,16.00 5.40,20.20"/><polyline points="20.20,5.40 16.00,1.70 11.80,5.40"/><rect x="10.6" y="10.6" width="10.8" height="10.8"/></g></svg>
<svg style="left:1512px;top:111px;" width="44" height="36" viewBox="0 0 44 36"><g stroke="#c4c4c4" stroke-width="2" fill="none" stroke-linejoin="round"><circle cx="6.6" cy="9.6" r="3.4"/><circle cx="19.9" cy="8.3" r="5.5"/><rect x="2.2" y="18" width="23.3" height="15"/><polygon points="29.2,23.2 40.2,20.2 40.2,31 29.2,28.2"/></g></svg>
<div style="left:421px;top:698.5px;width:156px;height:48.5px;background:#242424;"></div>
<div style="left:423px;top:700.5px;width:152px;height:44.5px;background:#2f2f2f;"></div>
<svg style="left:434px;top:711px;" width="28" height="26" viewBox="0 0 28 26"><rect x="1.2" y="1.2" width="25.6" height="22.6" rx="3.5" fill="none" stroke="#c5c6fb" stroke-width="2.2"/>
<g stroke="#c5c6fb" stroke-width="2"><line x1="2" y1="7.3" x2="26" y2="7.3"/><line x1="5.5" y1="12" x2="22.5" y2="12"/><line x1="5.5" y1="16" x2="18" y2="16"/><line x1="5.5" y1="20" x2="11" y2="20"/><line x1="13" y1="20" x2="22.5" y2="20"/></g></svg>
<div class="t" style="left:471px;top:708.0px;font-size:24px;line-height:32px;color:#bdbdbd;">Console</div>
<div style="left:575px;top:698.5px;width:158px;height:49.5px;background:#242424;"></div>
<div style="left:577px;top:700.5px;width:154px;height:47.5px;background:#37383a;"></div>
<svg style="left:587px;top:709px;" width="30" height="28" viewBox="0 0 30 28"><path d="M22,6 A11.5,11.5 0 1 0 22.5,21.5" fill="none" stroke="#c5c6fb" stroke-width="2.6" stroke-linecap="round"/>
<path d="M12.5,7.5 L12.5,15 L18,17.5" fill="none" stroke="#c5c6fb" stroke-width="2.4" stroke-linecap="round" stroke-linejoin="round"/>
<g stroke="#c5c6fb" stroke-width="2" stroke-linecap="round"><line x1="20.5" y1="10.8" x2="28" y2="10.8"/><line x1="21" y1="14.5" x2="25" y2="14.5"/></g></svg>
<div class="t" style="left:625px;top:708.0px;font-size:24px;line-height:32px;color:#ffffff;">Timeline</div>
<svg style="left:1537px;top:713px;" width="16" height="20" viewBox="0 0 16 20"><g stroke="#c8c8c8" stroke-width="2.7" stroke-linecap="round"><line x1="2" y1="2.3" x2="14" y2="2.3"/><line x1="2" y1="10" x2="14" y2="10"/><line x1="2" y1="17.7" x2="14" y2="17.7"/></g></svg>
<div style="left:423px;top:747px;width:1144px;height:671px;background:#37383a;"></div>
<div style="left:423px;top:747px;width:622px;height:101px;background:#313131;"></div>
<div class="t" style="left:433px;top:760.0px;font-size:24px;line-height:32px;color:#c8c8c8;font-family:"Liberation Sans", "Noto Sans CJK SC", sans-serif;">动画文件:</div>
<div style="left:554px;top:756px;width:241px;height:38px;background:#424242;border:1px solid #333;"></div>
<div class="t" style="left:562px;top:760.0px;font-size:24px;line-height:32px;color:#b4b4b4;width:198px;overflow:hidden;">787ebfd0-922c-4a7</div>
<svg style="left:764px;top:768px;" width="22" height="12" viewBox="0 0 22 12"><polygon points="0.5,0.5 21.5,0.5 11,11.5" fill="#c4c4c4"/></svg>
<svg style="left:809.0px;top:763.0px;" width="24" height="24" viewBox="0 0 24 24"><g stroke="#c8c8c8" stroke-width="3" stroke-linecap="round"><line x1="1.5" y1="12.0" x2="22.5" y2="12.0"/><line x1="12.0" y1="1.5" x2="12.0" y2="22.5"/></g></svg>
<svg style="left:566px;top:808px;" width="340" height="36" viewBox="0 0 340 36"><circle cx="12.8" cy="13.7" r="10.2" fill="#d9443c"/>
<g fill="#bdbdbd">
<rect x="51" y="3" width="3.2" height="21.5" rx="1"/><polygon points="66.5,2.5 66.5,25 54.5,13.7"/><polygon points="78.5,2.5 78.5,25 66.5,13.7"/>
<rect x="102.5" y="2.5" width="3.6" height="22.5" rx="1.2"/><polygon points="125,2.5 125,25 106.5,13.7" stroke="#bdbdbd" stroke-width="1" stroke-linejoin="round"/>
<polygon points="152,2 173,13.7 152,25.5" stroke="#bdbdbd" stroke-width="1.6" stroke-linejoin="round"/>
<polygon points="199,2.5 199,25 217.5,13.7" stroke="#bdbdbd" stroke-width="1" stroke-linejoin="round"/><rect x="217.8" y="2.5" width="3.6" height="22.5" rx="1.2"/>
<polygon points="251,2.5 251,25 263,13.7"/><polygon points="263,2.5 263,25 275,13.7"/><rect x="275" y="3" width="3.2" height="21.5" rx="1"/>
</g>
<g fill="none" stroke="#bdbdbd" stroke-width="3.4" stroke-linecap="round" stroke-linejoin="round"><path d="M313,7.3 L327,7.3 Q336.4,8 336.2,19"/><path d="M302.3,13 Q300.6,26 311,26.4 L327,26.8"/></g>
<polygon points="306.2,7.2 313.8,2.6 313.8,11.8" fill="#bdbdbd" stroke="#bdbdbd" stroke-width="1" stroke-linejoin="round"/><polygon points="333.6,27 326,22.6 326,31.4" fill="#bdbdbd" stroke="#bdbdbd" stroke-width="1" stroke-linejoin="round"/></svg>
<div style="left:426px;top:850px;width:602px;height:484px;background:#353638;"></div>
<div style="left:426px;top:850px;width:602px;height:44px;background:#384a6b;"></div>
<svg style="left:476px;top:864.5px;" width="15" height="16" viewBox="0 0 15 16"><polygon points="0.5,0.5 14.5,8 0.5,15.5" fill="#6b7a99"/></svg>
<div class="t m" style="left:511px;top:855.5px;font-size:26px;line-height:34px;color:#d0d0d0;">Bip001</div>
<div style="left:426px;top:894px;width:602px;height:45.5px;background:#3f3f3f;"></div>
<svg style="left:516px;top:908.5px;" width="15" height="16" viewBox="0 0 15 16"><polygon points="0.5,0.5 14.5,8 0.5,15.5" fill="#6c6c6c"/></svg>
<div class="t m" style="left:551px;top:899.5px;font-size:26px;line-height:34px;color:#d0d0d0;">Bip001 Pelvis</div>
<svg style="left:556px;top:952.5px;" width="15" height="16" viewBox="0 0 15 16"><polygon points="0.5,0.5 14.5,8 0.5,15.5" fill="#6c6c6c"/></svg>
<div class="t m" style="left:591px;top:943.5px;font-size:26px;line-height:34px;color:#d0d0d0;">Bip001 Spine</div>
<div style="left:426px;top:982px;width:602px;height:45.5px;background:#3f3f3f;"></div>
<svg style="left:596px;top:996.5px;" width="15" height="16" viewBox="0 0 15 16"><polygon points="0.5,0.5 14.5,8 0.5,15.5" fill="#6c6c6c"/></svg>
<div class="t m" style="left:631px;top:987.5px;font-size:26px;line-height:34px;color:#d0d0d0;">Bip001 Spine1</div>
<svg style="left:636px;top:1040.5px;" width="15" height="16" viewBox="0 0 15 16"><polygon points="0.5,0.5 14.5,8 0.5,15.5" fill="#6c6c6c"/></svg>
<div class="t m" style="left:671px;top:1031.5px;font-size:26px;line-height:34px;color:#d0d0d0;">Bip001 Neck</div>
<div style="left:426px;top:1070px;width:602px;height:45.5px;background:#3f3f3f;"></div>
<svg style="left:676px;top:1084.5px;" width="15" height="16" viewBox="0 0 15 16"><polygon points="0.5,0.5 14.5,8 0.5,15.5" fill="#6c6c6c"/></svg>
<div class="t m" style="left:711px;top:1075.5px;font-size:26px;line-height:34px;color:#d0d0d0;">Bip001 Head</div>
<svg style="left:716px;top:1128.5px;" width="15" height="16" viewBox="0 0 15 16"><polygon points="0.5,0.5 14.5,8 0.5,15.5" fill="#6c6c6c"/></svg>
<div class="t m" style="left:751px;top:1119.5px;font-size:26px;line-height:34px;color:#d0d0d0;">bianziB00</div>
<div style="left:426px;top:1158px;width:602px;height:45.5px;background:#3f3f3f;"></div>
<svg style="left:756px;top:1172.5px;" width="15" height="16" viewBox="0 0 15 16"><polygon points="0.5,0.5 14.5,8 0.5,15.5" fill="#6c6c6c"/></svg>
<div class="t m" style="left:791px;top:1163.5px;font-size:26px;line-height:34px;color:#d0d0d0;">bianziB01</div>
<svg style="left:796px;top:1216.5px;" width="15" height="16" viewBox="0 0 15 16"><polygon points="0.5,0.5 14.5,8 0.5,15.5" fill="#6c6c6c"/></svg>
<div class="t m" style="left:831px;top:1207.5px;font-size:26px;line-height:34px;color:#d0d0d0;">bianziB02</div>
<div style="left:426px;top:1246px;width:602px;height:45.5px;background:#3f3f3f;"></div>
<svg style="left:716px;top:1260.5px;" width="15" height="16" viewBox="0 0 15 16"><polygon points="0.5,0.5 14.5,8 0.5,15.5" fill="#6c6c6c"/></svg>
<div class="t m" style="left:751px;top:1251.5px;font-size:26px;line-height:34px;color:#d0d0d0;">danmawei00</div>
<svg style="left:756px;top:1304.5px;" width="15" height="16" viewBox="0 0 15 16"><polygon points="0.5,0.5 14.5,8 0.5,15.5" fill="#6c6c6c"/></svg>
<div class="t m" style="left:791px;top:1295.5px;font-size:26px;line-height:34px;color:#d0d0d0;">danmawei01</div>
<div style="left:1029px;top:851px;width:11px;height:480px;background:#333333;"></div>
<div style="left:1029px;top:851px;width:11px;height:120px;background:#5a5a5a;border-radius:5px;"></div>
<div style="left:1040px;top:851px;width:5px;height:480px;background:#262626;"></div>
<div style="left:555px;top:1363px;width:356px;height:49px;background:#454646;border:2px solid #262626;border-radius:11px;"></div>
<div class="t" style="left:555px;top:1372.5px;font-size:24px;line-height:32px;color:#b2b2b2;width:356px;text-align:center;font-family:"Liberation Sans", "Noto Sans CJK SC", sans-serif;">增加属性</div>
<div style="left:1045px;top:747px;width:522px;height:72px;background:#38393b;"></div>
<div style="left:1045px;top:818px;width:522px;height:33px;background:linear-gradient(#222222,#2a2a2b 35%,#37383a);"></div>
<div style="left:1045px;top:777px;width:522px;height:2px;background:#252525;"></div>
<svg style="left:1045px;top:747px;" width="522" height="60" viewBox="0 0 522 60"><rect x="16.5" y="31" width="3" height="17" fill="#252525"/><rect x="57" y="31" width="2" height="8" fill="#2a2a2a"/><rect x="97" y="31" width="2" height="8" fill="#2a2a2a"/><rect x="137" y="31" width="2" height="8" fill="#2a2a2a"/><rect x="177" y="31" width="2" height="8" fill="#2a2a2a"/><rect x="216.5" y="31" width="3" height="17" fill="#252525"/><rect x="257" y="31" width="2" height="8" fill="#2a2a2a"/><rect x="297" y="31" width="2" height="8" fill="#2a2a2a"/><rect x="337" y="31" width="2" height="8" fill="#2a2a2a"/><rect x="377" y="31" width="2" height="8" fill="#2a2a2a"/><rect x="416.5" y="31" width="3" height="17" fill="#252525"/><rect x="457" y="31" width="2" height="8" fill="#2a2a2a"/><rect x="497" y="31" width="2" height="8" fill="#2a2a2a"/></svg>
<div class="t" style="left:1033px;top:790.0px;font-size:19px;line-height:27px;color:#d4d4d4;width:60px;text-align:center;font-weight:bold;">0</div>
<div class="t" style="left:1233px;top:790.0px;font-size:19px;line-height:27px;color:#d4d4d4;width:60px;text-align:center;font-weight:bold;">5</div>
<div class="t" style="left:1433px;top:790.0px;font-size:19px;line-height:27px;color:#d4d4d4;width:60px;text-align:center;font-weight:bold;">10</div>
<div style="left:1461px;top:747px;width:3px;height:32px;background:#252525;"></div>
<div class="t" style="left:1472px;top:750.5px;font-size:19px;line-height:27px;color:#d0d0d0;font-weight:bold;">0. 33s</div>
<svg style="left:1045px;top:851px;" width="522" height="481" viewBox="0 0 522 481"><rect x="0" y="0" width="522" height="481" fill="#3f3f3f"/><rect x="16.5" y="0" width="3.5" height="481" fill="#393939"/><rect x="56.5" y="0" width="3.5" height="481" fill="#393939"/><rect x="96.5" y="0" width="3.5" height="481" fill="#393939"/><rect x="136.5" y="0" width="3.5" height="481" fill="#393939"/><rect x="176.5" y="0" width="3.5" height="481" fill="#393939"/><rect x="216.5" y="0" width="3.5" height="481" fill="#393939"/><rect x="256.5" y="0" width="3.5" height="481" fill="#393939"/><rect x="296.5" y="0" width="3.5" height="481" fill="#393939"/><rect x="336.5" y="0" width="3.5" height="481" fill="#393939"/><rect x="376.5" y="0" width="3.5" height="481" fill="#393939"/><rect x="416.5" y="0" width="3.5" height="481" fill="#393939"/><rect x="456.5" y="0" width="3.5" height="481" fill="#393939"/><rect x="496.5" y="0" width="3.5" height="481" fill="#393939"/><rect x="0" y="42.5" width="522" height="2.2" fill="#2b2b2b"/><rect x="0" y="86.5" width="522" height="2.2" fill="#2b2b2b"/><rect x="0" y="130.5" width="522" height="2.2" fill="#2b2b2b"/><rect x="0" y="174.5" width="522" height="2.2" fill="#2b2b2b"/><rect x="0" y="218.5" width="522" height="2.2" fill="#2b2b2b"/><rect x="0" y="262.5" width="522" height="2.2" fill="#2b2b2b"/><rect x="0" y="306.5" width="522" height="2.2" fill="#2b2b2b"/><rect x="0" y="350.5" width="522" height="2.2" fill="#2b2b2b"/><rect x="0" y="394.5" width="522" height="2.2" fill="#2b2b2b"/><rect x="0" y="438.5" width="522" height="2.2" fill="#2b2b2b"/><g fill="#6c6c6c" stroke="#2a2a2a" stroke-width="1.6" stroke-linejoin="round"><polygon points="6,22 18,10 30,22 18,34"/><polygon points="46,22 58,10 70,22 58,34"/><polygon points="86,22 98,10 110,22 98,34"/><polygon points="126,22 138,10 150,22 138,34"/><polygon points="166,22 178,10 190,22 178,34"/><polygon points="206,22 218,10 230,22 218,34"/><polygon points="246,22 258,10 270,22 258,34"/><polygon points="286,22 298,10 310,22 298,34"/><polygon points="326,22 338,10 350,22 338,34"/><polygon points="366,22 378,10 390,22 378,34"/><polygon points="406,22 418,10 430,22 418,34"/><polygon points="446,22 458,10 470,22 458,34"/><polygon points="486,22 498,10 510,22 498,34"/><polygon points="6,66 18,54 30,66 18,78"/><polygon points="46,66 58,54 70,66 58,78"/><polygon points="86,66 98,54 110,66 98,78"/><polygon points="126,66 138,54 150,66 138,78"/><polygon points="166,66 178,54 190,66 178,78"/><polygon points="206,66 218,54 230,66 218,78"/><polygon points="246,66 258,54 270,66 258,78"/><polygon points="286,66 298,54 310,66 298,78"/><polygon points="326,66 338,54 350,66 338,78"/><polygon points="366,66 378,54 390,66 378,78"/><polygon points="406,66 418,54 430,66 418,78"/><polygon points="446,66 458,54 470,66 458,78"/><polygon points="486,66 498,54 510,66 498,78"/><polygon points="6,110 18,98 30,110 18,122"/><polygon points="46,110 58,98 70,110 58,122"/><polygon points="86,110 98,98 110,110 98,122"/><polygon points="126,110 138,98 150,110 138,122"/><polygon points="166,110 178,98 190,110 178,122"/><polygon points="206,110 218,98 230,110 218,122"/><polygon points="246,110 258,98 270,110 258,122"/><polygon points="286,110 298,98 310,110 298,122"/><polygon points="326,110 338,98 350,110 338,122"/><polygon points="366,110 378,98 390,110 378,122"/><polygon points="406,110 418,98 430,110 418,122"/><polygon points="446,110 458,98 470,110 458,122"/><polygon points="486,110 498,98 510,110 498,122"/><polygon points="6,154 18,142 30,154 18,166"/><polygon points="46,154 58,142 70,154 58,166"/><polygon points="86,154 98,142 110,154 98,166"/><polygon points="126,154 138,142 150,154 138,166"/><polygon points="166,154 178,142 190,154 178,166"/><polygon points="206,154 218,142 230,154 218,166"/><polygon points="246,154 258,142 270,154 258,166"/><polygon points="286,154 298,142 310,154 298,166"/><polygon points="326,154 338,142 350,154 338,166"/><polygon points="366,154 378,142 390,154 378,166"/><polygon points="406,154 418,142 430,154 418,166"/><polygon points="446,154 458,142 470,154 458,166"/><polygon points="486,154 498,142 510,154 498,166"/><polygon points="6,198 18,186 30,198 18,210"/><polygon points="46,198 58,186 70,198 58,210"/><polygon points="86,198 98,186 110,198 98,210"/><polygon points="126,198 138,186 150,198 138,210"/><polygon points="166,198 178,186 190,198 178,210"/><polygon points="206,198 218,186 230,198 218,210"/><polygon points="246,198 258,186 270,198 258,210"/><polygon points="286,198 298,186 310,198 298,210"/><polygon points="326,198 338,186 350,198 338,210"/><polygon points="366,198 378,186 390,198 378,210"/><polygon points="406,198 418,186 430,198 418,210"/><polygon points="446,198 458,186 470,198 458,210"/><polygon points="486,198 498,186 510,198 498,210"/><polygon points="6,242 18,230 30,242 18,254"/><polygon points="46,242 58,230 70,242 58,254"/><polygon points="86,242 98,230 110,242 98,254"/><polygon points="126,242 138,230 150,242 138,254"/><polygon points="166,242 178,230 190,242 178,254"/><polygon points="206,242 218,230 230,242 218,254"/><polygon points="246,242 258,230 270,242 258,254"/><polygon points="286,242 298,230 310,242 298,254"/><polygon points="326,242 338,230 350,242 338,254"/><polygon points="366,242 378,230 390,242 378,254"/><polygon points="406,242 418,230 430,242 418,254"/><polygon points="446,242 458,230 470,242 458,254"/><polygon points="486,242 498,230 510,242 498,254"/><polygon points="6,286 18,274 30,286 18,298"/><polygon points="46,286 58,274 70,286 58,298"/><polygon points="86,286 98,274 110,286 98,298"/><polygon points="126,286 138,274 150,286 138,298"/><polygon points="166,286 178,274 190,286 178,298"/><polygon points="206,286 218,274 230,286 218,298"/><polygon points="246,286 258,274 270,286 258,298"/><polygon points="286,286 298,274 310,286 298,298"/><polygon points="326,286 338,274 350,286 338,298"/><polygon points="366,286 378,274 390,286 378,298"/><polygon points="406,286 418,274 430,286 418,298"/><polygon points="446,286 458,274 470,286 458,298"/><polygon points="486,286 498,274 510,286 498,298"/><polygon points="6,330 18,318 30,330 18,342"/><polygon points="46,330 58,318 70,330 58,342"/><polygon points="86,330 98,318 110,330 98,342"/><polygon points="126,330 138,318 150,330 138,342"/><polygon points="166,330 178,318 190,330 178,342"/><polygon points="206,330 218,318 230,330 218,342"/><polygon points="246,330 258,318 270,330 258,342"/><polygon points="286,330 298,318 310,330 298,342"/><polygon points="326,330 338,318 350,330 338,342"/><polygon points="366,330 378,318 390,330 378,342"/><polygon points="406,330 418,318 430,330 418,342"/><polygon points="446,330 458,318 470,330 458,342"/><polygon points="486,330 498,318 510,330 498,342"/><polygon points="6,374 18,362 30,374 18,386"/><polygon points="46,374 58,362 70,374 58,386"/><polygon points="86,374 98,362 110,374 98,386"/><polygon points="126,374 138,362 150,374 138,386"/><polygon points="166,374 178,362 190,374 178,386"/><polygon points="206,374 218,362 230,374 218,386"/><polygon points="246,374 258,362 270,374 258,386"/><polygon points="286,374 298,362 310,374 298,386"/><polygon points="326,374 338,362 350,374 338,386"/><polygon points="366,374 378,362 390,374 378,386"/><polygon points="406,374 418,362 430,374 418,386"/><polygon points="446,374 458,362 470,374 458,386"/><polygon points="486,374 498,362 510,374 498,386"/><polygon points="6,418 18,406 30,418 18,430"/><polygon points="46,418 58,406 70,418 58,430"/><polygon points="86,418 98,406 110,418 98,430"/><polygon points="126,418 138,406 150,418 138,430"/><polygon points="166,418 178,406 190,418 178,430"/><polygon points="206,418 218,406 230,418 218,430"/><polygon points="246,418 258,406 270,418 258,430"/><polygon points="286,418 298,406 310,418 298,430"/><polygon points="326,418 338,406 350,418 338,430"/><polygon points="366,418 378,406 390,418 378,430"/><polygon points="406,418 418,406 430,418 418,430"/><polygon points="446,418 458,406 470,418 458,430"/><polygon points="486,418 498,406 510,418 498,430"/><polygon points="6,462 18,450 30,462 18,474"/><polygon points="46,462 58,450 70,462 58,474"/><polygon points="86,462 98,450 110,462 98,474"/><polygon points="126,462 138,450 150,462 138,474"/><polygon points="166,462 178,450 190,462 178,474"/><polygon points="206,462 218,450 230,462 218,474"/><polygon points="246,462 258,450 270,462 258,474"/><polygon points="286,462 298,450 310,462 298,474"/><polygon points="326,462 338,450 350,462 338,474"/><polygon points="366,462 378,450 390,462 378,474"/><polygon points="406,462 418,450 430,462 418,474"/><polygon points="446,462 458,450 470,462 458,474"/><polygon points="486,462 498,450 510,462 498,474"/></g></svg>
<svg style="left:1085px;top:745px;" width="36" height="590" viewBox="0 0 36 590"><path d="M4,3.5 L32.5,3.5 L32.5,96.5 L18.2,105.5 L4,96.5 Z" fill="#3f6fb5" fill-opacity="0.42" stroke="#3d8ee3" stroke-width="2"/>
<rect x="5" y="72" width="26.5" height="5" fill="#2a4a78" opacity="0.35"/>
<line x1="18.2" y1="105" x2="18.2" y2="587" stroke="#4a90d9" stroke-width="2"/></svg>
<div style="left:1042px;top:1332px;width:525px;height:22px;background:#333333;"></div>
<div style="left:1042px;top:1332px;width:218px;height:21px;background:#5f5f5f;border-radius:10px;"></div>
<div style="left:1072px;top:1334px;width:2px;height:18px;background:#3a3a3a;"></div>
<div style="left:1228px;top:1334px;width:2px;height:18px;background:#3a3a3a;"></div>
<div style="left:1043px;top:1369px;width:170px;height:40px;background:#04264b;border:2px solid #0b1a2e;border-radius:11px;"></div>
<div class="t" style="left:1043px;top:1373.0px;font-size:24px;line-height:32px;color:#ffffff;width:170px;text-align:center;font-family:"Liberation Sans", "Noto Sans CJK SC", sans-serif;">关键帧模式</div>
<div style="left:1223px;top:1369px;width:169px;height:40px;background:#454646;border:2px solid #282828;border-radius:11px;"></div>
<div class="t" style="left:1223px;top:1373.0px;font-size:24px;line-height:32px;color:#a8a8a8;width:169px;text-align:center;font-family:"Liberation Sans", "Noto Sans CJK SC", sans-serif;">曲线模式</div>
<div style="left:1401px;top:1369px;width:120px;height:40px;background:#414141;border:1px solid #303030;"></div>
<div class="t" style="left:1410px;top:1374.0px;font-size:24px;line-height:32px;color:#d8d8d8;">1</div>
<div style="left:1535px;top:1369px;width:40px;height:40px;background:#414141;border:1px solid #303030;"></div>
<div class="t" style="left:1543px;top:1374.0px;font-size:24px;line-height:32px;color:#e0e0e0;">30</div>
<div style="left:1513px;top:1367px;width:31px;height:31px;background:#c9c9c9;border-radius:50%;"></div>
<svg style="left:1518px;top:1372px;" width="22" height="22" viewBox="0 0 22 22"><g fill="none" stroke="#3a3a3a" stroke-width="2"><path d="M11,3 L4,3 L4,19 L11,19"/><line x1="8" y1="11" x2="18" y2="11"/><polyline points="14.5,7 18.5,11 14.5,15"/></g></svg>
<div style="left:1567px;top:690px;width:9px;height:728px;background:#2e2e2e;"></div>
<div style="left:1574px;top:56.5px;width:168px;height:49.5px;background:#242424;"></div>
<div style="left:1576px;top:58.5px;width:164px;height:47.5px;background:#37383a;"></div>
<svg style="left:1587px;top:69px;" width="28" height="26" viewBox="0 0 28 26"><rect x="1.2" y="1.2" width="25.6" height="22.6" rx="3" fill="#37383a" stroke="#c5c6fb" stroke-width="2.2"/>
<rect x="1.5" y="1.5" width="25" height="6.2" fill="#c5c6fb"/><line x1="8.5" y1="4" x2="24.5" y2="4" stroke="#4a4b66" stroke-width="1.5"/>
<ellipse cx="9" cy="14.8" rx="2.6" ry="3.2" fill="#37383a" stroke="#c5c6fb" stroke-width="1.8"/><line x1="11.5" y1="14.8" x2="23.5" y2="14.8" stroke="#c5c6fb" stroke-width="2"/><line x1="4" y1="14.8" x2="6.5" y2="14.8" stroke="#c5c6fb" stroke-width="1.6"/></svg>
<div class="t" style="left:1625px;top:66.0px;font-size:24px;line-height:32px;color:#ffffff;">Inspector</div>
<div style="left:1575px;top:105px;width:2px;height:1313px;background:#2a2a2b;"></div>
<div style="left:1577px;top:105px;width:608px;height:52px;background:#37383a;"></div>
<div style="left:1576px;top:157px;width:608px;height:2px;background:#2b2b2c;"></div>
<div style="left:1576px;top:159px;width:608px;height:9px;background:#37383a;"></div>
<div style="left:1576px;top:168px;width:608px;height:2px;background:#2b2b2c;"></div>
<div style="left:1576px;top:171px;width:608px;height:40px;background:#2e2e2e;"></div>
<svg style="left:1583px;top:185px;" width="20" height="12" viewBox="0 0 20 12"><polygon points="0,0.5 20,0.5 10,11.5" fill="#c8c8c8"/></svg>
<div class="t" style="left:1615px;top:176.0px;font-size:24px;line-height:32px;color:#d0d0d0;">AnimatorControllerLayer</div>
<div class="t" style="left:1609px;top:230.0px;font-size:24px;line-height:32px;color:#d0d0d0;">Name</div>
<div style="left:1908px;top:226.5px;width:300px;height:39px;background:#424242;border:2px solid #303031;"></div>
<div class="t" style="left:1916px;top:231.5px;font-size:24px;line-height:32px;color:#d2d2d2;">BaseLayer</div>
<div class="t" style="left:1609px;top:280.0px;font-size:24px;line-height:32px;color:#d0d0d0;">Play On Wake</div>
<div style="left:1907px;top:283.5px;width:28px;height:27px;background:#484848;border:2px solid #2a2a2a;"></div>
<svg style="left:1912px;top:288px;" width="20" height="18" viewBox="0 0 20 18"><path d="M2.5,10.5 L6,9 L8.5,13 Q12,6 17.5,2 L18,3 Q13,9 10,16.5 L6.5,16.5 Z" fill="#e8e8e8"/></svg>
<div class="t" style="left:1609px;top:328.0px;font-size:24px;line-height:32px;color:#d0d0d0;">Blending Mode</div>
<div style="left:1908px;top:324.5px;width:300px;height:39px;background:#424242;border:2px solid #303031;"></div>
<div class="t" style="left:1916px;top:329.5px;font-size:24px;line-height:32px;color:#d2d2d2;">override</div>
<div class="t" style="left:1609px;top:378.0px;font-size:24px;line-height:32px;color:#d0d0d0;">Default Weight</div>
<div style="left:1911px;top:394px;width:400px;height:4px;background:#555555;"></div>
<div class="t" style="left:1609px;top:428.0px;font-size:24px;line-height:32px;color:#d0d0d0;">States</div>
<svg style="left:1917.0px;top:431.0px;" width="24" height="24" viewBox="0 0 24 24"><g stroke="#c8c8c8" stroke-width="3" stroke-linecap="round"><line x1="1.5" y1="12.0" x2="22.5" y2="12.0"/><line x1="12.0" y1="1.5" x2="12.0" y2="22.5"/></g></svg>
<svg style="left:1960px;top:430px;" width="26" height="28" viewBox="0 0 26 28"><polygon points="13,1.5 24,7.5 24,20.5 13,26.5 2,20.5 2,7.5" fill="none" stroke="#c4c4c4" stroke-width="1.8" stroke-linejoin="round"/><circle cx="13" cy="14" r="4.2" fill="none" stroke="#c4c4c4" stroke-width="1.8"/></svg>
<div class="t" style="left:1639px;top:484.0px;font-size:24px;line-height:32px;color:#d0d0d0;">0</div>
<div class="t" style="left:1669px;top:540.0px;font-size:24px;line-height:32px;color:#d0d0d0;">Name</div>
<div style="left:1967px;top:536.5px;width:300px;height:39px;background:#424242;border:2px solid #303031;"></div>
<div class="t" style="left:1975px;top:541.5px;font-size:24px;line-height:32px;color:#d2d2d2;">idle</div>
<div class="t" style="left:1669px;top:590.0px;font-size:24px;line-height:32px;color:#d0d0d0;">Speed</div>
<div style="left:1967px;top:586.5px;width:119px;height:39px;background:#424242;border:2px solid #303031;"></div>
<div class="t" style="left:1975px;top:591.5px;font-size:24px;line-height:32px;color:#d2d2d2;">0</div>
<div class="t" style="left:1669px;top:640.0px;font-size:24px;line-height:32px;color:#d0d0d0;">Clip Start</div>
<div style="left:1987px;top:656.1px;width:400px;height:4px;background:#555555;"></div>
<div style="left:1971px;top:642.0px;width:27.5px;height:27.5px;background:#464847;border:2px solid #262627;border-radius:50%;"></div>
<div class="t" style="left:1669px;top:690.0px;font-size:24px;line-height:32px;color:#d0d0d0;">Clip End</div>
<div style="left:1987px;top:706.1px;width:400px;height:4px;background:#555555;"></div>
<div style="left:1971px;top:692.0px;width:27.5px;height:27.5px;background:#464847;border:2px solid #262627;border-radius:50%;"></div>
<div class="t" style="left:1669px;top:740.0px;font-size:24px;line-height:32px;color:#d0d0d0;">Clip</div>
<div style="left:1967px;top:736.5px;width:300px;height:39px;background:#424242;border:2px solid #303031;"></div>
<svg style="left:1972.5px;top:743px;" width="27.5" height="26.0" viewBox="240 248 505 478"><g fill="none" stroke="#6fdcf7" stroke-linecap="round" stroke-linejoin="round">
<circle cx="585" cy="300" r="44" fill="#6fdcf7" stroke="none"/>
<path d="M545,372 L478,515" stroke-width="92"/>
<path d="M560,385 L645,385 L712,338" stroke-width="46"/>
<path d="M520,348 L410,350 L350,398" stroke-width="46"/>
<path d="M480,520 L572,590 L620,672" stroke-width="52"/>
<path d="M465,510 L385,560 L275,548" stroke-width="52"/>
<path d="M345,635 L428,635 M390,690 L535,690" stroke-width="30" stroke-linecap="butt"/>
<path d="M285,465 L380,465" stroke-width="24" stroke="#5aa6de" stroke-linecap="butt"/></g></svg>
<div class="t" style="left:2010px;top:741.5px;font-size:24px;line-height:32px;color:#d2d2d2;">Take_001</div>
<div class="t" style="left:1639px;top:790.0px;font-size:24px;line-height:32px;color:#d0d0d0;">1</div>
<div class="t" style="left:1669px;top:846.0px;font-size:24px;line-height:32px;color:#d0d0d0;">Name</div>
<div style="left:1967px;top:842.5px;width:300px;height:39px;background:#424242;border:2px solid #303031;"></div>
<div class="t" style="left:1975px;top:847.5px;font-size:24px;line-height:32px;color:#d2d2d2;">run</div>
<div class="t" style="left:1669px;top:896.0px;font-size:24px;line-height:32px;color:#d0d0d0;">Speed</div>
<div style="left:1967px;top:892.5px;width:119px;height:39px;background:#424242;border:2px solid #303031;"></div>
<div class="t" style="left:1975px;top:897.5px;font-size:24px;line-height:32px;color:#d2d2d2;">0</div>
<div class="t" style="left:1669px;top:946.0px;font-size:24px;line-height:32px;color:#d0d0d0;">Clip Start</div>
<div style="left:1987px;top:962.1px;width:400px;height:4px;background:#555555;"></div>
<div style="left:1971px;top:948.0px;width:27.5px;height:27.5px;background:#464847;border:2px solid #262627;border-radius:50%;"></div>
<div class="t" style="left:1669px;top:996.0px;font-size:24px;line-height:32px;color:#d0d0d0;">Clip End</div>
<div style="left:1987px;top:1012.1px;width:400px;height:4px;background:#555555;"></div>
<div style="left:1971px;top:998.0px;width:27.5px;height:27.5px;background:#464847;border:2px solid #262627;border-radius:50%;"></div>
<div class="t" style="left:1669px;top:1046.0px;font-size:24px;line-height:32px;color:#d0d0d0;">Clip</div>
<div style="left:1967px;top:1042.5px;width:300px;height:39px;background:#424242;border:2px solid #303031;"></div>
<svg style="left:1972.5px;top:1049px;" width="27.5" height="26.0" viewBox="240 248 505 478"><g fill="none" stroke="#6fdcf7" stroke-linecap="round" stroke-linejoin="round">
<circle cx="585" cy="300" r="44" fill="#6fdcf7" stroke="none"/>
<path d="M545,372 L478,515" stroke-width="92"/>
<path d="M560,385 L645,385 L712,338" stroke-width="46"/>
<path d="M520,348 L410,350 L350,398" stroke-width="46"/>
<path d="M480,520 L572,590 L620,672" stroke-width="52"/>
<path d="M465,510 L385,560 L275,548" stroke-width="52"/>
<path d="M345,635 L428,635 M390,690 L535,690" stroke-width="30" stroke-linecap="butt"/>
<path d="M285,465 L380,465" stroke-width="24" stroke="#5aa6de" stroke-linecap="butt"/></g></svg>
<div class="t" style="left:2010px;top:1047.5px;font-size:24px;line-height:32px;color:#d2d2d2;">Take_001</div>
<div style="left:1576px;top:1095px;width:608px;height:2px;background:#2b2b2c;"></div>
<div style="left:1576px;top:1097px;width:608px;height:40px;background:#2e2e2e;"></div>
<svg style="left:1583px;top:1111px;" width="20" height="12" viewBox="0 0 20 12"><polygon points="0,0.5 20,0.5 10,11.5" fill="#c8c8c8"/></svg>
<div class="t" style="left:1615px;top:1102.0px;font-size:24px;line-height:32px;color:#d0d0d0;">AnimatorState</div>
<div class="t" style="left:1609px;top:1156.0px;font-size:24px;line-height:32px;color:#d0d0d0;">Name</div>
<div style="left:1908px;top:1152.5px;width:300px;height:39px;background:#424242;border:2px solid #303031;"></div>
<div class="t" style="left:1916px;top:1157.5px;font-size:24px;line-height:32px;color:#d2d2d2;">idle</div>
<div class="t" style="left:1609px;top:1206.0px;font-size:24px;line-height:32px;color:#d0d0d0;">Speed</div>
<div style="left:1908px;top:1202.5px;width:119px;height:39px;background:#424242;border:2px solid #303031;"></div>
<div class="t" style="left:1916px;top:1207.5px;font-size:24px;line-height:32px;color:#d2d2d2;">0</div>
<div class="t" style="left:1609px;top:1256.0px;font-size:24px;line-height:32px;color:#d0d0d0;">Clip Start</div>
<div style="left:1927.2px;top:1272.1px;width:400px;height:4px;background:#555555;"></div>
<div style="left:1911.2px;top:1258.0px;width:27.5px;height:27.5px;background:#464847;border:2px solid #262627;border-radius:50%;"></div>
<div class="t" style="left:1609px;top:1306.0px;font-size:24px;line-height:32px;color:#d0d0d0;">Clip End</div>
<div style="left:1927.2px;top:1322.1px;width:400px;height:4px;background:#555555;"></div>
<div style="left:1911.2px;top:1308.0px;width:27.5px;height:27.5px;background:#464847;border:2px solid #262627;border-radius:50%;"></div>
<div class="t" style="left:1609px;top:1356.0px;font-size:24px;line-height:32px;color:#d0d0d0;">Clip</div>
<div style="left:1908px;top:1352.5px;width:300px;height:39px;background:#424242;border:2px solid #303031;"></div>
<svg style="left:1913.5px;top:1359px;" width="27.5" height="26.0" viewBox="240 248 505 478"><g fill="none" stroke="#6fdcf7" stroke-linecap="round" stroke-linejoin="round">
<circle cx="585" cy="300" r="44" fill="#6fdcf7" stroke="none"/>
<path d="M545,372 L478,515" stroke-width="92"/>
<path d="M560,385 L645,385 L712,338" stroke-width="46"/>
<path d="M520,348 L410,350 L350,398" stroke-width="46"/>
<path d="M480,520 L572,590 L620,672" stroke-width="52"/>
<path d="M465,510 L385,560 L275,548" stroke-width="52"/>
<path d="M345,635 L428,635 M390,690 L535,690" stroke-width="30" stroke-linecap="butt"/>
<path d="M285,465 L380,465" stroke-width="24" stroke="#5aa6de" stroke-linecap="butt"/></g></svg>
<div class="t" style="left:1951px;top:1357.5px;font-size:24px;line-height:32px;color:#d2d2d2;">Take_001</div>
</body></html>
